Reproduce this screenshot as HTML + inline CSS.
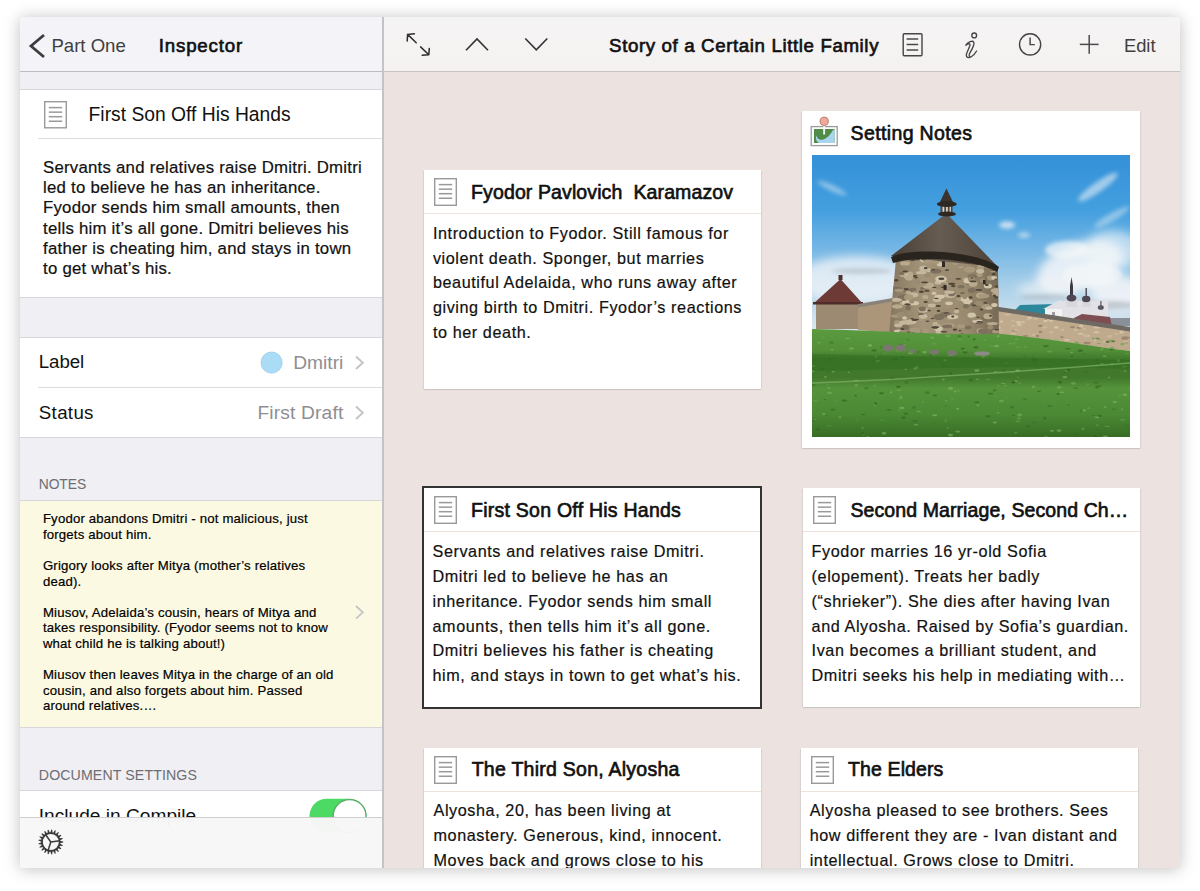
<!DOCTYPE html>
<html><head><meta charset="utf-8"><title>Scrivener Inspector</title><style>
html,body{margin:0;padding:0}
body{width:1200px;height:891px;background:#fff;overflow:hidden;position:relative;font-family:"Liberation Sans",sans-serif}
#screen{position:absolute;left:20px;top:17px;width:1160px;height:851px;overflow:hidden;background:#ece3e1;box-shadow:0 1px 15px rgba(0,0,0,.25)}
.a{position:absolute}
.t{position:absolute;white-space:pre;line-height:1;font-family:"Liberation Sans",sans-serif}
svg{position:absolute;overflow:visible}
</style></head><body>
<div id="screen">
<div class="a" style="left:0px;top:0px;width:363px;height:54px;background:#f4f4f8;"></div>
<div class="a" style="left:0px;top:54px;width:363px;height:1px;background:#bcbcc1;"></div>
<div class="a" style="left:0px;top:55px;width:363px;height:18px;background:#efeff4;"></div>
<div class="a" style="left:0px;top:72px;width:363px;height:1px;background:#d6d6db;"></div>
<div class="a" style="left:0px;top:73px;width:363px;height:207px;background:#ffffff;"></div>
<div class="a" style="left:0px;top:280px;width:363px;height:1px;background:#d6d6db;"></div>
<div class="a" style="left:0px;top:281px;width:363px;height:39px;background:#efeff4;"></div>
<div class="a" style="left:0px;top:320px;width:363px;height:1px;background:#d6d6db;"></div>
<div class="a" style="left:0px;top:321px;width:363px;height:99px;background:#ffffff;"></div>
<div class="a" style="left:18px;top:370px;width:345px;height:1px;background:#dcdce0;"></div>
<div class="a" style="left:0px;top:420px;width:363px;height:1px;background:#d6d6db;"></div>
<div class="a" style="left:0px;top:421px;width:363px;height:62px;background:#efeff4;"></div>
<div class="a" style="left:0px;top:483px;width:363px;height:1px;background:#d6d6db;"></div>
<div class="a" style="left:0px;top:484px;width:363px;height:226px;background:#fcf9e3;"></div>
<div class="a" style="left:0px;top:710px;width:363px;height:1px;background:#d6d6db;"></div>
<div class="a" style="left:0px;top:711px;width:363px;height:62px;background:#efeff4;"></div>
<div class="a" style="left:0px;top:773px;width:363px;height:1px;background:#d6d6db;"></div>
<div class="a" style="left:0px;top:774px;width:363px;height:77px;background:#ffffff;"></div>
<svg style="left:6px;top:13px;" width="24" height="32" viewBox="26 30 24 32"><polyline points="44,35 31,46 44,57" fill="none" stroke="#3d3d3d" stroke-width="2.8" stroke-linecap="butt" stroke-linejoin="miter"/></svg>
<div class="t" style="left:31.40px;top:20.26px;font-size:18.6px;color:#3f3f3f;">Part One</div>
<div class="t" style="left:138.80px;top:20.17px;font-size:18.7px;color:#111;letter-spacing:0.814px;-webkit-text-stroke:0.65px #111;">Inspector</div>
<svg style="left:23px;top:82.5px;" width="25" height="29.5" viewBox="43 99.5 25 29.5"><rect x="44.7" y="101.2" width="21.6" height="26.1" fill="#fff" stroke="#999" stroke-width="1.4"/><line x1="48.8" y1="107.10" x2="62.2" y2="107.10" stroke="#999" stroke-width="1.5"/><line x1="48.8" y1="111.65" x2="62.2" y2="111.65" stroke="#999" stroke-width="1.5"/><line x1="48.8" y1="116.20" x2="62.2" y2="116.20" stroke="#999" stroke-width="1.5"/><line x1="48.8" y1="120.75" x2="62.2" y2="120.75" stroke="#999" stroke-width="1.5"/></svg>
<div class="a" style="left:18px;top:121px;width:345px;height:1px;background:#dcdce0;"></div>
<div class="t" style="left:68.60px;top:87.66px;font-size:19.3px;color:#111;letter-spacing:-0.007px;">First Son Off His Hands</div>
<div class="t" style="left:23.00px;top:142.78px;font-size:16.8px;color:#111;letter-spacing:0.240px;-webkit-text-stroke:0.2px #111;">Servants and relatives raise Dmitri. Dmitri</div>
<div class="t" style="left:23.00px;top:163.08px;font-size:16.8px;color:#111;letter-spacing:0.240px;-webkit-text-stroke:0.2px #111;">led to believe he has an inheritance.</div>
<div class="t" style="left:23.00px;top:183.38px;font-size:16.8px;color:#111;letter-spacing:0.240px;-webkit-text-stroke:0.2px #111;">Fyodor sends him small amounts, then</div>
<div class="t" style="left:23.00px;top:203.68px;font-size:16.8px;color:#111;letter-spacing:0.240px;-webkit-text-stroke:0.2px #111;">tells him it’s all gone. Dmitri believes his</div>
<div class="t" style="left:23.00px;top:223.98px;font-size:16.8px;color:#111;letter-spacing:0.240px;-webkit-text-stroke:0.2px #111;">father is cheating him, and stays in town</div>
<div class="t" style="left:23.00px;top:244.28px;font-size:16.8px;color:#111;letter-spacing:0.240px;-webkit-text-stroke:0.2px #111;">to get what’s his.</div>
<div class="t" style="left:18.80px;top:336.17px;font-size:18.7px;color:#111;letter-spacing:-0.087px;">Label</div>
<svg style="left:238px;top:333px;" width="28" height="26" viewBox="258 350 28 26"><circle cx="271.6" cy="362.6" r="10.6" fill="#abdcf5" stroke="#9acde6" stroke-width="0.8"/></svg>
<div class="t" style="left:273.20px;top:335.75px;font-size:19.2px;color:#8e8e93;letter-spacing:0.018px;">Dmitri</div>
<svg style="left:330px;top:333px;" width="20" height="26" viewBox="350 350 20 26"><polyline points="356,356.5 362.8,362.8 356,369" fill="none" stroke="#c4c4c9" stroke-width="2"/></svg>
<div class="t" style="left:18.80px;top:386.87px;font-size:18.7px;color:#111;letter-spacing:0.336px;">Status</div>
<div class="t" style="left:237.40px;top:386.45px;font-size:19.2px;color:#8e8e93;letter-spacing:0.162px;">First Draft</div>
<svg style="left:330px;top:383px;" width="20" height="26" viewBox="350 400 20 26"><polyline points="356,406.5 362.8,412.8 356,419" fill="none" stroke="#c4c4c9" stroke-width="2"/></svg>
<div class="t" style="left:18.70px;top:460.83px;font-size:13.9px;color:#6d6d72;letter-spacing:-0.092px;">NOTES</div>
<div class="t" style="left:22.90px;top:495.43px;font-size:13.2px;color:#000;letter-spacing:0.176px;-webkit-text-stroke:0.2px #000;">Fyodor abandons Dmitri - not malicious, just</div>
<div class="t" style="left:22.90px;top:511.01px;font-size:13.2px;color:#000;letter-spacing:0.176px;-webkit-text-stroke:0.2px #000;">forgets about him.</div>
<div class="t" style="left:22.90px;top:542.17px;font-size:13.2px;color:#000;letter-spacing:0.176px;-webkit-text-stroke:0.2px #000;">Grigory looks after Mitya (mother’s relatives</div>
<div class="t" style="left:22.90px;top:557.75px;font-size:13.2px;color:#000;letter-spacing:0.176px;-webkit-text-stroke:0.2px #000;">dead).</div>
<div class="t" style="left:22.90px;top:588.91px;font-size:13.2px;color:#000;letter-spacing:0.176px;-webkit-text-stroke:0.2px #000;">Miusov, Adelaida’s cousin, hears of Mitya and</div>
<div class="t" style="left:22.90px;top:604.49px;font-size:13.2px;color:#000;letter-spacing:0.176px;-webkit-text-stroke:0.2px #000;">takes responsibility. (Fyodor seems not to know</div>
<div class="t" style="left:22.90px;top:620.07px;font-size:13.2px;color:#000;letter-spacing:0.176px;-webkit-text-stroke:0.2px #000;">what child he is talking about!)</div>
<div class="t" style="left:22.90px;top:651.23px;font-size:13.2px;color:#000;letter-spacing:0.176px;-webkit-text-stroke:0.2px #000;">Miusov then leaves Mitya in the charge of an old</div>
<div class="t" style="left:22.90px;top:666.81px;font-size:13.2px;color:#000;letter-spacing:0.176px;-webkit-text-stroke:0.2px #000;">cousin, and also forgets about him. Passed</div>
<div class="t" style="left:22.90px;top:682.39px;font-size:13.2px;color:#000;letter-spacing:0.176px;-webkit-text-stroke:0.2px #000;">around relatives.…</div>
<svg style="left:330px;top:583px;" width="20" height="26" viewBox="350 600 20 26"><polyline points="356,606 362.8,612.3 356,618.6" fill="none" stroke="#c4c4c9" stroke-width="1.8"/></svg>
<div class="t" style="left:18.80px;top:750.98px;font-size:14.2px;color:#6d6d72;letter-spacing:0.094px;">DOCUMENT SETTINGS</div>
<div class="t" style="left:18.80px;top:789.33px;font-size:19.1px;color:#111;letter-spacing:0.018px;">Include in Compile</div>
<svg style="left:285px;top:777px;" width="67" height="46" viewBox="305 794 67 46"><rect x="309.5" y="798.8" width="57" height="34.5" rx="17.25" fill="#4cd964"/><circle cx="349.6" cy="816" r="16.4" fill="#fff" stroke="#5aa865" stroke-width="1.3"/></svg>
<div class="a" style="left:0px;top:800px;width:363px;height:51px;background:rgba(247,247,247,0.975);"></div>
<div class="a" style="left:0px;top:800px;width:363px;height:1px;background:#cfcfcf;"></div>
<svg style="left:16px;top:811px;" width="30" height="29" viewBox="36 828 30 29"><path d="M59.40,843.25 L63.20,842.45 L63.20,841.55 L59.40,840.75Z M58.65,845.73 L62.52,846.08 L62.78,845.22 L59.39,843.34Z M57.20,847.88 L60.79,849.36 L61.30,848.61 L58.61,845.81Z M55.18,849.50 L58.18,851.98 L58.88,851.41 L57.14,847.94Z M52.78,850.46 L54.91,853.71 L55.75,853.38 L55.11,849.55Z M50.20,850.67 L51.28,854.40 L52.18,854.33 L52.69,850.48Z M47.67,850.11 L47.60,853.99 L48.48,854.19 L50.10,850.66Z M45.42,848.82 L44.21,852.51 L44.99,852.96 L47.58,850.07Z M43.65,846.93 L41.40,850.10 L42.02,850.76 L45.35,848.77Z M42.51,844.61 L39.43,846.97 L39.82,847.79 L43.59,846.86Z M42.11,842.05 L38.47,843.40 L38.61,844.29 L42.48,844.52Z M42.48,839.48 L38.61,839.71 L38.47,840.60 L42.11,841.95Z M43.59,837.14 L39.82,836.21 L39.43,837.03 L42.51,839.39Z M45.35,835.23 L42.02,833.24 L41.40,833.90 L43.65,837.07Z M47.58,833.93 L44.99,831.04 L44.21,831.49 L45.42,835.18Z M50.10,833.34 L48.48,829.81 L47.60,830.01 L47.67,833.89Z M52.69,833.52 L52.18,829.67 L51.28,829.60 L50.20,833.33Z M55.11,834.45 L55.75,830.62 L54.91,830.29 L52.78,833.54Z M57.14,836.06 L58.88,832.59 L58.18,832.02 L55.18,834.50Z M58.61,838.19 L61.30,835.39 L60.79,834.64 L57.20,836.12Z M59.39,840.66 L62.78,838.78 L62.52,837.92 L58.65,838.27Z" fill="#3a3a3a"/><circle cx="50.8" cy="842" r="8.9" fill="none" stroke="#3a3a3a" stroke-width="1.8"/><line x1="50.8" y1="842" x2="45.52" y2="834.46" stroke="#3a3a3a" stroke-width="1.5"/><line x1="50.8" y1="842" x2="59.91" y2="840.72" stroke="#3a3a3a" stroke-width="1.5"/><line x1="50.8" y1="842" x2="47.96" y2="850.75" stroke="#3a3a3a" stroke-width="1.5"/></svg>
<div class="a" style="left:362px;top:0px;width:2px;height:851px;background:#c4c4c7;"></div>
<div class="a" style="left:364px;top:0px;width:796px;height:54px;background:linear-gradient(#f5f4f4,#f5f1f1);"></div>
<div class="a" style="left:364px;top:54px;width:796px;height:1px;background:#c8c3c3;"></div>
<svg style="left:380px;top:11px;" width="36" height="34" viewBox="400 28 36 34"><g fill="none" stroke="#2e2e2e" stroke-width="1.5" stroke-linecap="round" stroke-linejoin="round"><path d="M407.6,34.4 L416.2,42.8 M407.2,41 L407.6,34.4 L414.4,33.8"/><path d="M420.6,46.9 L428.8,54.8 M429.3,48.4 L428.8,54.8 L422.2,55.3"/></g></svg>
<svg style="left:440px;top:16px;" width="34" height="23" viewBox="460 33 34 23"><polyline points="466,50.2 477,38.9 488,50.2" fill="none" stroke="#333" stroke-width="1.6"/></svg>
<svg style="left:500px;top:16px;" width="34" height="23" viewBox="520 33 34 23"><polyline points="525.3,38.5 536.3,49.8 547.3,38.5" fill="none" stroke="#333" stroke-width="1.6"/></svg>
<div class="t" style="left:589.10px;top:19.87px;font-size:18.7px;color:#111;letter-spacing:0.616px;-webkit-text-stroke:0.65px #111;">Story of a Certain Little Family</div>
<svg style="left:878px;top:11px;" width="30" height="34" viewBox="898 28 30 34"><rect x="903.2" y="33.8" width="18.8" height="22" rx="1" fill="none" stroke="#454545" stroke-width="1.4"/><g stroke="#454545" stroke-width="1.45"><line x1="906.6" y1="39" x2="918.2" y2="39"/><line x1="906.6" y1="44.5" x2="918.2" y2="44.5"/><line x1="906.6" y1="50" x2="918.2" y2="50"/></g></svg>
<svg style="left:938px;top:11px;" width="28" height="34" viewBox="958 28 28 34"><circle cx="974.2" cy="35.4" r="2.4" fill="none" stroke="#454545" stroke-width="1.35"/><path d="M965.8,45.2 C968,42.2 972.5,39.8 973.8,42.2 C975,44.5 971.5,50 969.6,53.5 C968.5,56 969.5,57.6 971.5,56.5 C973.5,55.3 975.5,53 976.6,51 M965.8,45.2 C967.5,44 969.8,43.2 970,44.6 C970.3,46.3 966.5,52 966.3,55 C966.1,58 969,58.2 971.5,56.5" fill="none" stroke="#454545" stroke-width="1.35" stroke-linejoin="round" stroke-linecap="round"/></svg>
<svg style="left:995px;top:13px;" width="31" height="30" viewBox="1015 30 31 30"><circle cx="1030.1" cy="44.4" r="10.6" fill="none" stroke="#454545" stroke-width="1.4"/><polyline points="1030.1,37.6 1030.1,44.6 1034.8,44.6" fill="none" stroke="#454545" stroke-width="1.45"/></svg>
<svg style="left:1056px;top:14px;" width="26" height="27" viewBox="1076 31 26 27"><g stroke="#4a4a4a" stroke-width="1.5"><line x1="1079.8" y1="44.4" x2="1098.6" y2="44.4"/><line x1="1089.2" y1="35" x2="1089.2" y2="53.8"/></g></svg>
<div class="t" style="left:1103.90px;top:19.92px;font-size:18.4px;color:#3f3f3f;letter-spacing:-0.026px;">Edit</div>
<div class="a" style="left:404px;top:153px;width:337px;height:219px;background:#fff;box-shadow:0 0.5px 1.5px rgba(0,0,0,.35);"></div>
<div class="a" style="left:404px;top:196px;width:337px;height:1px;background:#eee3dc;"></div>
<svg style="left:413px;top:160px;" width="25" height="30" viewBox="433 177 25 30"><rect x="434.7" y="178.7" width="21.6" height="26.6" fill="#fff" stroke="#999" stroke-width="1.4"/><line x1="438.8" y1="184.60" x2="452.2" y2="184.60" stroke="#999" stroke-width="1.5"/><line x1="438.8" y1="189.15" x2="452.2" y2="189.15" stroke="#999" stroke-width="1.5"/><line x1="438.8" y1="193.70" x2="452.2" y2="193.70" stroke="#999" stroke-width="1.5"/><line x1="438.8" y1="198.25" x2="452.2" y2="198.25" stroke="#999" stroke-width="1.5"/></svg>
<div class="t" style="left:451.10px;top:165.89px;font-size:19.5px;color:#111;letter-spacing:0.110px;-webkit-text-stroke:0.65px #111;">Fyodor Pavlovich  Karamazov</div>
<div class="t" style="left:412.90px;top:207.89px;font-size:16.2px;color:#111;letter-spacing:0.584px;-webkit-text-stroke:0.2px #111;">Introduction to Fyodor. Still famous for</div>
<div class="t" style="left:412.90px;top:232.69px;font-size:16.2px;color:#111;letter-spacing:0.584px;-webkit-text-stroke:0.2px #111;">violent death. Sponger, but marries</div>
<div class="t" style="left:412.90px;top:257.49px;font-size:16.2px;color:#111;letter-spacing:0.584px;-webkit-text-stroke:0.2px #111;">beautiful Adelaida, who runs away after</div>
<div class="t" style="left:412.90px;top:282.29px;font-size:16.2px;color:#111;letter-spacing:0.584px;-webkit-text-stroke:0.2px #111;">giving birth to Dmitri. Fyodor’s reactions</div>
<div class="t" style="left:412.90px;top:307.09px;font-size:16.2px;color:#111;letter-spacing:0.584px;-webkit-text-stroke:0.2px #111;">to her death.</div>
<div class="a" style="left:782px;top:94px;width:338px;height:337px;background:#fff;box-shadow:0 0.5px 1.5px rgba(0,0,0,.35);"></div>
<div class="t" style="left:830.60px;top:106.69px;font-size:19.5px;color:#111;letter-spacing:0.363px;-webkit-text-stroke:0.65px #111;">Setting Notes</div>
<svg style="left:788px;top:97px;" width="34" height="36" viewBox="808 114 34 36"><rect x="811.2" y="126.6" width="26" height="19" fill="#fff" stroke="#9a9a9a" stroke-width="1.3"/><rect x="814" y="129" width="20.5" height="14" fill="#4f8c48"/><path d="M816.5,135.5 C817.5,141.5 826,142.5 833,130 L834.5,130 L834.5,143 L819,143 C816,141.5 815.5,138 816.5,135.5 Z" fill="#a9d4f0"/><rect x="823.2" y="125.5" width="1.9" height="9" fill="#f4f8f4"/><circle cx="824.2" cy="121.3" r="4.1" fill="#f2a898" stroke="#a87060" stroke-width="0.9"/></svg>
<svg style="left:792px;top:138px;overflow:hidden" width="318" height="282" viewBox="0 0 318 282">
<defs>
<linearGradient id="sky" x1="0" y1="0" x2="0" y2="1">
<stop offset="0" stop-color="#3490d8"/><stop offset="0.2" stop-color="#45a0df"/>
<stop offset="0.34" stop-color="#78b8e5"/><stop offset="0.46" stop-color="#a8cfe9"/><stop offset="0.6" stop-color="#d6e4ed"/></linearGradient>
<linearGradient id="grass" x1="0" y1="0" x2="0" y2="1">
<stop offset="0" stop-color="#5c9a40"/><stop offset="0.2" stop-color="#528f38"/><stop offset="0.28" stop-color="#3f782b"/>
<stop offset="0.45" stop-color="#42782c"/><stop offset="0.55" stop-color="#55933b"/><stop offset="0.8" stop-color="#4a8834"/><stop offset="1" stop-color="#376d25"/></linearGradient>
<linearGradient id="stone" x1="0" y1="0" x2="1" y2="0">
<stop offset="0" stop-color="#85775f"/><stop offset="0.3" stop-color="#a39479"/><stop offset="0.7" stop-color="#9a8b70"/><stop offset="1" stop-color="#766954"/></linearGradient>
<linearGradient id="roof" x1="0" y1="0" x2="1" y2="0">
<stop offset="0" stop-color="#463e36"/><stop offset="0.45" stop-color="#675c51"/><stop offset="1" stop-color="#4d433a"/></linearGradient>
<clipPath id="twr"><path d="M84,104 C110,100 160,104 186,114 L187,180 C160,184 110,184 77,179 Z"/></clipPath><clipPath id="wal"><polygon points="184,155 318,175 318,196 184,180"/></clipPath>
<filter id="bl5" x="-50%" y="-50%" width="200%" height="200%"><feGaussianBlur stdDeviation="5"/></filter>
<filter id="bl2" x="-50%" y="-50%" width="200%" height="200%"><feGaussianBlur stdDeviation="2"/></filter>
</defs>
<rect width="318" height="282" fill="url(#sky)"/>
<g filter="url(#bl5)" fill="#f4f6f8">
<ellipse cx="268" cy="112" rx="45" ry="24" opacity="0.85" transform="rotate(-20 268 112)"/>
<ellipse cx="300" cy="95" rx="28" ry="20" opacity="0.6"/>
<ellipse cx="305" cy="138" rx="26" ry="18" opacity="0.85"/>
<ellipse cx="235" cy="135" rx="30" ry="10" opacity="0.55"/>
<ellipse cx="45" cy="125" rx="62" ry="24" opacity="0.75"/>
</g>
<g filter="url(#bl2)" fill="#f4f6f8">
<ellipse cx="286" cy="32" rx="24" ry="5" opacity="0.55" transform="rotate(-35 286 32)"/>
<ellipse cx="300" cy="62" rx="20" ry="4" opacity="0.4" transform="rotate(-30 300 62)"/>
<ellipse cx="195" cy="70" rx="8" ry="3.5" opacity="0.75"/>
<ellipse cx="212" cy="80" rx="6" ry="2.5" opacity="0.6"/>
<ellipse cx="20" cy="33" rx="16" ry="3" opacity="0.45" transform="rotate(25 20 33)"/>
<ellipse cx="255" cy="95" rx="22" ry="9" opacity="0.7"/>
<ellipse cx="280" cy="120" rx="30" ry="12" opacity="0.7"/>
</g>
<g filter="url(#bl2)" fill="#8a929c" opacity="0.4">
<ellipse cx="232" cy="142" rx="24" ry="2.5"/><ellipse cx="300" cy="150" rx="22" ry="4"/><ellipse cx="50" cy="116" rx="30" ry="2.5"/>
</g>
<!-- church -->
<rect x="296" y="163" width="22" height="8" fill="#8a9099"/>
<rect x="204" y="155" width="48" height="17" fill="#e9ebee"/>
<polygon points="199,159 208,150 244,149 249,159" fill="#2b8799"/>
<rect x="233" y="153" width="30" height="17" fill="#f1f2f4"/>
<polygon points="231,154 248,145 264,154" fill="#dfe1e5"/>
<rect x="240" y="157" width="3" height="4" fill="#9a9aa0"/><rect x="250" y="157" width="3" height="4" fill="#9a9aa0"/>
<rect x="250" y="146" width="46" height="20" fill="#e2e2e6"/>
<rect x="254" y="142" width="11" height="10" fill="#d8d8dc"/><rect x="270" y="143" width="9" height="9" fill="#d8d8dc"/>
<polygon points="262,163 270,159 298,162 300,172 262,172" fill="#7d4d52"/>
<rect x="258" y="131" width="3" height="12" fill="#3d3a40"/><polygon points="258,131 259.5,122 261,131" fill="#3d3a40"/>
<ellipse cx="259.5" cy="143" rx="5" ry="3.5" fill="#4e4854"/>
<rect x="273.5" y="133" width="1.4" height="8" fill="#4a4450"/><ellipse cx="274.2" cy="144" rx="4.2" ry="3.2" fill="#4e4854"/>
<rect x="288.3" y="146" width="1.2" height="5" fill="#5a5460"/><ellipse cx="288.8" cy="152.5" rx="3" ry="2.3" fill="#5a5460"/>
<!-- right wall -->
<polygon points="184,155 318,175 318,196 184,180" fill="#bfaa8d"/>
<g clip-path="url(#wal)">
<ellipse cx="312.7" cy="183.8" rx="3.4" ry="1.0" fill="#9c8870"/>
<ellipse cx="275.1" cy="181.0" rx="2.3" ry="1.1" fill="#d4c4a8"/>
<ellipse cx="249.9" cy="182.1" rx="2.0" ry="0.9" fill="#9c8870"/>
<ellipse cx="236.0" cy="164.6" rx="3.3" ry="1.1" fill="#9c8870"/>
<ellipse cx="201.2" cy="171.0" rx="2.3" ry="1.1" fill="#c9b79c"/>
<ellipse cx="312.9" cy="182.4" rx="3.3" ry="1.2" fill="#9c8870"/>
<ellipse cx="211.2" cy="167.1" rx="2.0" ry="0.8" fill="#d4c4a8"/>
<ellipse cx="189.3" cy="175.3" rx="2.0" ry="0.9" fill="#c9b79c"/>
<ellipse cx="221.6" cy="179.7" rx="1.8" ry="1.2" fill="#c9b79c"/>
<ellipse cx="207.0" cy="168.0" rx="2.9" ry="1.1" fill="#d4c4a8"/>
<ellipse cx="213.5" cy="181.1" rx="2.5" ry="1.0" fill="#9c8870"/>
<ellipse cx="275.1" cy="188.0" rx="3.5" ry="1.3" fill="#9c8870"/>
<ellipse cx="263.6" cy="175.3" rx="2.0" ry="1.3" fill="#c9b79c"/>
<ellipse cx="202.6" cy="175.7" rx="2.9" ry="0.9" fill="#9c8870"/>
<ellipse cx="283.1" cy="185.4" rx="1.6" ry="1.4" fill="#c9b79c"/>
<ellipse cx="227.0" cy="171.2" rx="1.7" ry="0.9" fill="#c9b79c"/>
<ellipse cx="228.4" cy="176.9" rx="1.7" ry="1.2" fill="#9c8870"/>
<ellipse cx="292.3" cy="186.4" rx="1.9" ry="1.4" fill="#c9b79c"/>
<ellipse cx="215.9" cy="164.4" rx="2.9" ry="1.0" fill="#9c8870"/>
<ellipse cx="297.5" cy="181.3" rx="2.8" ry="1.3" fill="#c9b79c"/>
<ellipse cx="309.6" cy="177.3" rx="2.2" ry="1.4" fill="#d4c4a8"/>
<ellipse cx="232.4" cy="172.3" rx="2.8" ry="1.4" fill="#c9b79c"/>
<ellipse cx="318.0" cy="182.6" rx="3.3" ry="0.9" fill="#9c8870"/>
<ellipse cx="201.2" cy="178.9" rx="3.0" ry="1.4" fill="#c9b79c"/>
<ellipse cx="239.4" cy="177.2" rx="2.4" ry="1.4" fill="#c9b79c"/>
<ellipse cx="236.3" cy="165.3" rx="2.1" ry="1.3" fill="#c9b79c"/>
<ellipse cx="260.5" cy="172.1" rx="2.5" ry="1.2" fill="#9c8870"/>
<ellipse cx="274.5" cy="180.7" rx="3.4" ry="0.9" fill="#d4c4a8"/>
<ellipse cx="223.8" cy="163.7" rx="3.2" ry="1.3" fill="#c9b79c"/>
<ellipse cx="314.6" cy="187.5" rx="1.6" ry="1.1" fill="#9c8870"/>
<ellipse cx="284.9" cy="172.4" rx="2.9" ry="1.1" fill="#d4c4a8"/>
<ellipse cx="267.2" cy="172.8" rx="2.6" ry="1.1" fill="#9c8870"/>
<ellipse cx="244.4" cy="172.4" rx="2.5" ry="1.4" fill="#d4c4a8"/>
<ellipse cx="268.6" cy="178.7" rx="2.9" ry="1.0" fill="#d4c4a8"/>
<ellipse cx="253.6" cy="185.2" rx="1.8" ry="1.4" fill="#c9b79c"/>
<ellipse cx="311.7" cy="189.9" rx="2.6" ry="0.9" fill="#c9b79c"/>
<ellipse cx="314.0" cy="186.6" rx="2.6" ry="1.0" fill="#c9b79c"/>
<ellipse cx="208.2" cy="168.0" rx="1.7" ry="1.3" fill="#c9b79c"/>
<ellipse cx="204.0" cy="175.0" rx="2.8" ry="1.0" fill="#c9b79c"/>
<ellipse cx="186.8" cy="172.6" rx="1.8" ry="1.3" fill="#d4c4a8"/>
<ellipse cx="225.5" cy="181.1" rx="1.8" ry="1.3" fill="#9c8870"/>
<ellipse cx="269.1" cy="171.0" rx="2.3" ry="1.6" fill="#d4c4a8"/>
<ellipse cx="274.0" cy="181.1" rx="2.4" ry="1.4" fill="#c9b79c"/>
<ellipse cx="201.1" cy="166.0" rx="2.2" ry="1.0" fill="#c9b79c"/>
<ellipse cx="304.2" cy="179.1" rx="1.7" ry="1.0" fill="#c9b79c"/>
<ellipse cx="207.3" cy="169.9" rx="2.6" ry="1.0" fill="#d4c4a8"/>
<ellipse cx="195.5" cy="159.4" rx="3.5" ry="1.4" fill="#c9b79c"/>
<ellipse cx="284.6" cy="177.2" rx="3.0" ry="1.0" fill="#d4c4a8"/>
<ellipse cx="250.5" cy="175.0" rx="1.9" ry="1.2" fill="#c9b79c"/>
<ellipse cx="233.4" cy="166.0" rx="2.1" ry="1.3" fill="#d4c4a8"/>
<ellipse cx="272.1" cy="174.0" rx="2.0" ry="0.9" fill="#c9b79c"/>
<ellipse cx="189.3" cy="166.7" rx="1.8" ry="1.1" fill="#d4c4a8"/>
<ellipse cx="255.4" cy="184.8" rx="2.9" ry="0.9" fill="#d4c4a8"/>
<ellipse cx="295.6" cy="186.5" rx="2.2" ry="0.9" fill="#9c8870"/>
<ellipse cx="228.3" cy="170.9" rx="2.6" ry="1.1" fill="#9c8870"/>
<ellipse cx="217.6" cy="162.9" rx="2.6" ry="1.3" fill="#d4c4a8"/>
<ellipse cx="239.2" cy="165.9" rx="1.9" ry="1.1" fill="#d4c4a8"/>
<ellipse cx="206.8" cy="166.9" rx="2.7" ry="0.9" fill="#d4c4a8"/>
<ellipse cx="216.0" cy="164.7" rx="2.8" ry="1.1" fill="#c9b79c"/>
<ellipse cx="298.3" cy="181.7" rx="1.9" ry="1.1" fill="#c9b79c"/>
</g>
<polygon points="184,151.5 318,172 318,176.5 184,156" fill="#6e6963"/>
<!-- left tower -->
<rect x="4" y="147" width="44" height="27" fill="#9c8b72"/>
<polygon points="28.5,124 1,149 51,149" fill="#6e3a36"/>
<rect x="1" y="147" width="50" height="2.5" fill="#4f2d2a"/>
<rect x="26.5" y="120" width="4" height="5" fill="#4d302c"/>
<!-- left wall -->
<polygon points="46,152 84,145.5 84,178 46,175" fill="#ab9679"/>
<polygon points="46,149 84,142.5 84,146 46,152.5" fill="#8a8178"/>
<!-- main tower -->
<path d="M84,104 C110,100 160,104 186,114 L187,180 C160,184 110,184 77,179 Z" fill="url(#stone)"/>
<g clip-path="url(#twr)">
<ellipse cx="116.7" cy="115.5" rx="4.8" ry="1.6" fill="#d0c4ab"/>
<ellipse cx="93.5" cy="148.3" rx="5.7" ry="1.9" fill="#b9aa8e"/>
<ellipse cx="127.8" cy="109.3" rx="2.8" ry="2.2" fill="#d0c4ab"/>
<ellipse cx="96.5" cy="121.0" rx="4.7" ry="3.1" fill="#d0c4ab"/>
<ellipse cx="143.1" cy="107.8" rx="3.3" ry="2.4" fill="#a8987c"/>
<ellipse cx="113.3" cy="115.0" rx="2.9" ry="2.0" fill="#9a8b72"/>
<ellipse cx="102.3" cy="148.2" rx="4.7" ry="2.1" fill="#d0c4ab"/>
<ellipse cx="155.9" cy="146.9" rx="4.7" ry="2.3" fill="#d0c4ab"/>
<ellipse cx="127.2" cy="127.9" rx="4.5" ry="2.3" fill="#c4b79e"/>
<ellipse cx="109.1" cy="117.7" rx="5.2" ry="1.6" fill="#c4b79e"/>
<ellipse cx="137.0" cy="170.5" rx="5.1" ry="2.0" fill="#b9aa8e"/>
<ellipse cx="95.9" cy="135.8" rx="5.1" ry="1.8" fill="#7d705d"/>
<ellipse cx="126.6" cy="177.1" rx="2.8" ry="2.4" fill="#c4b79e"/>
<ellipse cx="118.4" cy="130.6" rx="4.2" ry="2.9" fill="#b9aa8e"/>
<ellipse cx="168.8" cy="175.8" rx="4.2" ry="2.6" fill="#b9aa8e"/>
<ellipse cx="157.8" cy="127.5" rx="4.5" ry="2.7" fill="#7d705d"/>
<ellipse cx="112.7" cy="133.3" rx="4.8" ry="1.5" fill="#7d705d"/>
<ellipse cx="119.9" cy="150.4" rx="4.2" ry="1.9" fill="#c4b79e"/>
<ellipse cx="97.1" cy="122.8" rx="3.9" ry="3.0" fill="#b9aa8e"/>
<ellipse cx="100.8" cy="134.5" rx="3.5" ry="1.7" fill="#7d705d"/>
<ellipse cx="171.3" cy="125.2" rx="4.0" ry="2.1" fill="#7d705d"/>
<ellipse cx="180.7" cy="115.5" rx="3.1" ry="1.9" fill="#a8987c"/>
<ellipse cx="85.2" cy="167.2" rx="3.1" ry="2.0" fill="#a8987c"/>
<ellipse cx="126.3" cy="132.1" rx="4.5" ry="3.1" fill="#9a8b72"/>
<ellipse cx="170.8" cy="176.2" rx="4.8" ry="2.8" fill="#7d705d"/>
<ellipse cx="174.9" cy="163.3" rx="5.6" ry="2.9" fill="#7d705d"/>
<ellipse cx="124.2" cy="134.0" rx="4.2" ry="2.2" fill="#a8987c"/>
<ellipse cx="90.8" cy="119.9" rx="3.1" ry="2.1" fill="#b9aa8e"/>
<ellipse cx="94.3" cy="147.1" rx="4.4" ry="3.1" fill="#d0c4ab"/>
<ellipse cx="86.6" cy="170.4" rx="4.6" ry="1.8" fill="#c4b79e"/>
<ellipse cx="180.5" cy="149.8" rx="4.2" ry="1.7" fill="#7d705d"/>
<ellipse cx="184.3" cy="139.4" rx="4.2" ry="1.6" fill="#b9aa8e"/>
<ellipse cx="159.7" cy="160.3" rx="4.2" ry="2.7" fill="#d0c4ab"/>
<ellipse cx="86.3" cy="176.3" rx="4.3" ry="1.7" fill="#d0c4ab"/>
<ellipse cx="176.3" cy="161.6" rx="3.5" ry="2.6" fill="#b9aa8e"/>
<ellipse cx="154.3" cy="123.8" rx="3.8" ry="1.8" fill="#a8987c"/>
<ellipse cx="137.8" cy="163.2" rx="3.7" ry="1.9" fill="#a8987c"/>
<ellipse cx="165.4" cy="166.2" rx="5.1" ry="1.9" fill="#d0c4ab"/>
<ellipse cx="133.8" cy="159.6" rx="6.0" ry="2.8" fill="#7d705d"/>
<ellipse cx="110.2" cy="156.6" rx="5.8" ry="2.3" fill="#9a8b72"/>
<ellipse cx="183.8" cy="176.6" rx="3.8" ry="1.9" fill="#a8987c"/>
<ellipse cx="131.5" cy="129.7" rx="4.2" ry="3.2" fill="#d0c4ab"/>
<ellipse cx="168.9" cy="140.4" rx="4.8" ry="2.9" fill="#b9aa8e"/>
<ellipse cx="168.3" cy="113.1" rx="3.9" ry="2.7" fill="#a8987c"/>
<ellipse cx="132.3" cy="117.6" rx="5.3" ry="2.1" fill="#9a8b72"/>
<ellipse cx="124.0" cy="134.5" rx="5.8" ry="2.7" fill="#a8987c"/>
<ellipse cx="184.3" cy="106.1" rx="4.6" ry="2.3" fill="#9a8b72"/>
<ellipse cx="98.8" cy="166.8" rx="5.9" ry="2.6" fill="#c4b79e"/>
<ellipse cx="99.7" cy="145.7" rx="2.6" ry="2.9" fill="#9a8b72"/>
<ellipse cx="149.6" cy="144.0" rx="5.8" ry="2.2" fill="#a8987c"/>
<ellipse cx="167.4" cy="120.0" rx="3.4" ry="2.0" fill="#a8987c"/>
<ellipse cx="161.1" cy="128.8" rx="4.4" ry="2.9" fill="#b9aa8e"/>
<ellipse cx="175.9" cy="130.9" rx="4.1" ry="2.5" fill="#d0c4ab"/>
<ellipse cx="126.5" cy="173.7" rx="4.3" ry="2.4" fill="#d0c4ab"/>
<ellipse cx="135.6" cy="170.3" rx="5.2" ry="2.5" fill="#a8987c"/>
<ellipse cx="101.4" cy="140.0" rx="5.0" ry="2.4" fill="#c4b79e"/>
<ellipse cx="152.9" cy="144.3" rx="4.2" ry="2.8" fill="#d0c4ab"/>
<ellipse cx="89.7" cy="118.5" rx="2.6" ry="1.7" fill="#7d705d"/>
<ellipse cx="140.7" cy="161.8" rx="5.7" ry="2.3" fill="#d0c4ab"/>
<ellipse cx="182.3" cy="150.1" rx="3.2" ry="2.0" fill="#d0c4ab"/>
<ellipse cx="137.9" cy="140.3" rx="5.8" ry="2.7" fill="#c4b79e"/>
<ellipse cx="177.2" cy="171.8" rx="3.2" ry="2.3" fill="#7d705d"/>
<ellipse cx="96.3" cy="137.6" rx="2.8" ry="1.9" fill="#b9aa8e"/>
<ellipse cx="105.5" cy="127.0" rx="2.9" ry="2.8" fill="#9a8b72"/>
<ellipse cx="149.0" cy="131.8" rx="3.4" ry="1.7" fill="#7d705d"/>
<ellipse cx="106.2" cy="176.4" rx="3.9" ry="2.3" fill="#9a8b72"/>
<ellipse cx="168.1" cy="116.3" rx="4.0" ry="2.4" fill="#c4b79e"/>
<ellipse cx="126.5" cy="131.1" rx="2.8" ry="2.1" fill="#c4b79e"/>
<ellipse cx="140.0" cy="137.5" rx="2.6" ry="2.1" fill="#d0c4ab"/>
<ellipse cx="113.8" cy="177.0" rx="2.9" ry="3.1" fill="#a8987c"/>
<ellipse cx="182.1" cy="112.0" rx="3.4" ry="1.6" fill="#a8987c"/>
<ellipse cx="111.3" cy="113.8" rx="4.0" ry="3.0" fill="#c4b79e"/>
<ellipse cx="125.0" cy="144.8" rx="4.3" ry="2.3" fill="#c4b79e"/>
<ellipse cx="93.0" cy="108.4" rx="4.9" ry="2.2" fill="#b9aa8e"/>
<ellipse cx="111.2" cy="105.3" rx="2.8" ry="1.9" fill="#d0c4ab"/>
<ellipse cx="170.5" cy="109.1" rx="5.5" ry="2.3" fill="#c4b79e"/>
<ellipse cx="184.4" cy="135.7" rx="5.7" ry="2.6" fill="#b9aa8e"/>
<ellipse cx="137.2" cy="122.1" rx="2.9" ry="1.8" fill="#b9aa8e"/>
<ellipse cx="102.3" cy="174.9" rx="4.7" ry="2.4" fill="#a8987c"/>
<ellipse cx="113.3" cy="142.0" rx="3.1" ry="2.1" fill="#b9aa8e"/>
<ellipse cx="184.4" cy="106.8" rx="2.6" ry="2.4" fill="#a8987c"/>
<ellipse cx="135.9" cy="122.7" rx="4.1" ry="2.6" fill="#9a8b72"/>
<ellipse cx="127.6" cy="141.6" rx="5.4" ry="2.2" fill="#d0c4ab"/>
<ellipse cx="115.1" cy="120.4" rx="3.3" ry="1.8" fill="#9a8b72"/>
<ellipse cx="157.6" cy="114.6" rx="6.0" ry="3.2" fill="#a8987c"/>
<ellipse cx="85.4" cy="151.5" rx="5.6" ry="2.2" fill="#b9aa8e"/>
<ellipse cx="92.5" cy="167.9" rx="5.5" ry="2.6" fill="#c4b79e"/>
<ellipse cx="144.5" cy="156.6" rx="2.7" ry="1.8" fill="#c4b79e"/>
<ellipse cx="129.0" cy="124.0" rx="5.9" ry="3.2" fill="#d0c4ab"/>
<ellipse cx="116.7" cy="106.6" rx="5.6" ry="1.9" fill="#a8987c"/>
<ellipse cx="84.1" cy="133.0" rx="4.2" ry="2.4" fill="#a8987c"/>
<ellipse cx="109.1" cy="163.0" rx="2.8" ry="2.9" fill="#a8987c"/>
<ellipse cx="124.4" cy="107.2" rx="2.6" ry="2.0" fill="#a8987c"/>
<ellipse cx="92.5" cy="176.8" rx="5.5" ry="1.8" fill="#9a8b72"/>
<ellipse cx="163.2" cy="149.3" rx="5.2" ry="2.7" fill="#7d705d"/>
<ellipse cx="99.1" cy="159.0" rx="4.8" ry="1.6" fill="#9a8b72"/>
<ellipse cx="174.1" cy="151.7" rx="5.1" ry="2.9" fill="#a8987c"/>
<ellipse cx="175.9" cy="161.2" rx="4.5" ry="2.9" fill="#b9aa8e"/>
<ellipse cx="167.5" cy="148.4" rx="5.6" ry="2.7" fill="#9a8b72"/>
<ellipse cx="148.9" cy="110.5" rx="2.6" ry="2.6" fill="#b9aa8e"/>
<ellipse cx="122.0" cy="138.3" rx="2.7" ry="1.5" fill="#d0c4ab"/>
<ellipse cx="152.7" cy="141.2" rx="2.5" ry="2.9" fill="#9a8b72"/>
<ellipse cx="178.2" cy="172.2" rx="2.8" ry="2.4" fill="#9a8b72"/>
<ellipse cx="158.4" cy="123.2" rx="2.8" ry="2.0" fill="#9a8b72"/>
<ellipse cx="160.4" cy="121.5" rx="4.8" ry="2.3" fill="#7d705d"/>
<ellipse cx="91.8" cy="173.2" rx="3.5" ry="1.6" fill="#9a8b72"/>
<ellipse cx="148.9" cy="109.9" rx="3.0" ry="1.9" fill="#9a8b72"/>
<ellipse cx="154.0" cy="151.2" rx="3.0" ry="2.3" fill="#7d705d"/>
<ellipse cx="111.1" cy="155.1" rx="4.9" ry="2.6" fill="#c4b79e"/>
<ellipse cx="155.6" cy="125.7" rx="4.1" ry="2.8" fill="#d0c4ab"/>
<ellipse cx="104.1" cy="178.3" rx="5.8" ry="1.5" fill="#7d705d"/>
<ellipse cx="91.7" cy="142.5" rx="6.0" ry="3.2" fill="#7d705d"/>
<ellipse cx="105.2" cy="175.9" rx="3.2" ry="2.5" fill="#a8987c"/>
<ellipse cx="159.5" cy="123.9" rx="3.8" ry="2.5" fill="#9a8b72"/>
<ellipse cx="135.4" cy="171.4" rx="5.0" ry="1.9" fill="#7d705d"/>
<ellipse cx="123.8" cy="116.1" rx="5.8" ry="2.7" fill="#7d705d"/>
<ellipse cx="114.5" cy="114.7" rx="3.7" ry="2.0" fill="#c4b79e"/>
<ellipse cx="84.2" cy="161.1" rx="5.4" ry="1.7" fill="#a8987c"/>
<ellipse cx="156.0" cy="172.5" rx="3.5" ry="2.1" fill="#7d705d"/>
<ellipse cx="123.4" cy="170.1" rx="2.8" ry="3.1" fill="#c4b79e"/>
<ellipse cx="170.3" cy="125.3" rx="2.7" ry="2.6" fill="#9a8b72"/>
<ellipse cx="178.5" cy="122.9" rx="3.4" ry="2.4" fill="#a8987c"/>
<ellipse cx="162.1" cy="163.7" rx="4.0" ry="1.5" fill="#9a8b72"/>
<ellipse cx="124.4" cy="170.6" rx="4.4" ry="1.8" fill="#b9aa8e"/>
<ellipse cx="89.0" cy="159.7" rx="4.1" ry="2.8" fill="#9a8b72"/>
<ellipse cx="171.8" cy="140.9" rx="5.7" ry="2.4" fill="#a8987c"/>
<ellipse cx="131.7" cy="130.1" rx="3.5" ry="2.8" fill="#9a8b72"/>
<ellipse cx="110.3" cy="153.9" rx="3.6" ry="2.4" fill="#7d705d"/>
<ellipse cx="96.1" cy="152.9" rx="2.8" ry="2.4" fill="#7d705d"/>
<ellipse cx="139.6" cy="138.4" rx="3.7" ry="2.8" fill="#7d705d"/>
<ellipse cx="98.1" cy="118.6" rx="2.8" ry="2.1" fill="#b9aa8e"/>
<ellipse cx="116.2" cy="132.0" rx="5.3" ry="1.8" fill="#b9aa8e"/>
<ellipse cx="159.7" cy="135.4" rx="3.9" ry="2.4" fill="#7d705d"/>
<ellipse cx="111.3" cy="161.2" rx="4.2" ry="2.5" fill="#c4b79e"/>
<ellipse cx="96.7" cy="142.3" rx="4.7" ry="3.0" fill="#a8987c"/>
<ellipse cx="93.4" cy="172.2" rx="3.8" ry="2.6" fill="#7d705d"/>
<ellipse cx="180.3" cy="168.5" rx="5.6" ry="1.5" fill="#b9aa8e"/>
<ellipse cx="126.9" cy="162.0" rx="5.3" ry="3.1" fill="#7d705d"/>
<ellipse cx="84.0" cy="133.8" rx="5.7" ry="2.9" fill="#7d705d"/>
<ellipse cx="182.2" cy="122.9" rx="2.9" ry="1.8" fill="#d0c4ab"/>
<ellipse cx="182.2" cy="112.3" rx="5.4" ry="2.7" fill="#7d705d"/>
<ellipse cx="92.6" cy="163.0" rx="2.5" ry="1.7" fill="#d0c4ab"/>
<ellipse cx="176.9" cy="153.1" rx="3.6" ry="1.7" fill="#c4b79e"/>
<ellipse cx="137.4" cy="137.2" rx="5.2" ry="1.7" fill="#c4b79e"/>
<ellipse cx="137.0" cy="148.3" rx="3.9" ry="1.9" fill="#d0c4ab"/>
<ellipse cx="84.1" cy="144.8" rx="6.0" ry="2.0" fill="#c4b79e"/>
<ellipse cx="149.1" cy="171.2" rx="4.2" ry="1.9" fill="#a8987c"/>
<ellipse cx="87.0" cy="135.3" rx="4.8" ry="1.6" fill="#a8987c"/>
<ellipse cx="134.3" cy="155.3" rx="4.0" ry="1.9" fill="#9a8b72"/>
<ellipse cx="126.9" cy="132.1" rx="4.2" ry="2.7" fill="#9a8b72"/>
<ellipse cx="126.5" cy="155.9" rx="1.9" ry="1.1" fill="#4f463a"/>
<ellipse cx="158.7" cy="142.4" rx="1.9" ry="1.2" fill="#4f463a"/>
<ellipse cx="115.5" cy="166.3" rx="2.0" ry="0.7" fill="#4f463a"/>
<ellipse cx="160.8" cy="126.4" rx="3.4" ry="0.9" fill="#4f463a"/>
<ellipse cx="102.9" cy="121.0" rx="2.3" ry="1.0" fill="#4f463a"/>
<ellipse cx="179.8" cy="115.1" rx="2.3" ry="0.7" fill="#4f463a"/>
<ellipse cx="182.4" cy="114.8" rx="1.6" ry="0.6" fill="#4f463a"/>
<ellipse cx="123.7" cy="172.3" rx="3.3" ry="1.0" fill="#4f463a"/>
<ellipse cx="184.8" cy="174.8" rx="2.2" ry="0.7" fill="#4f463a"/>
<ellipse cx="178.5" cy="160.7" rx="1.6" ry="1.0" fill="#4f463a"/>
<ellipse cx="122.2" cy="132.4" rx="2.2" ry="0.7" fill="#4f463a"/>
<ellipse cx="84.3" cy="125.3" rx="2.2" ry="1.2" fill="#4f463a"/>
<ellipse cx="96.5" cy="177.3" rx="1.9" ry="0.8" fill="#4f463a"/>
<ellipse cx="167.0" cy="166.5" rx="2.4" ry="0.6" fill="#4f463a"/>
<ellipse cx="131.8" cy="132.3" rx="3.3" ry="0.7" fill="#4f463a"/>
<ellipse cx="120.8" cy="172.2" rx="1.6" ry="0.8" fill="#4f463a"/>
<ellipse cx="166.0" cy="162.3" rx="1.6" ry="0.6" fill="#4f463a"/>
<ellipse cx="90.3" cy="173.9" rx="2.0" ry="1.0" fill="#4f463a"/>
<ellipse cx="174.8" cy="129.8" rx="2.0" ry="1.2" fill="#4f463a"/>
<ellipse cx="146.3" cy="123.9" rx="2.9" ry="0.8" fill="#4f463a"/>
<ellipse cx="111.8" cy="104.3" rx="3.0" ry="1.1" fill="#4f463a"/>
<ellipse cx="148.0" cy="175.7" rx="1.5" ry="0.7" fill="#4f463a"/>
<ellipse cx="132.0" cy="176.7" rx="3.4" ry="0.8" fill="#4f463a"/>
<ellipse cx="109.4" cy="136.7" rx="2.5" ry="1.2" fill="#4f463a"/>
<ellipse cx="102.5" cy="165.0" rx="3.0" ry="1.1" fill="#4f463a"/>
<ellipse cx="162.1" cy="150.2" rx="2.2" ry="0.8" fill="#4f463a"/>
<ellipse cx="120.5" cy="163.5" rx="1.7" ry="0.7" fill="#4f463a"/>
<ellipse cx="160.0" cy="122.8" rx="1.6" ry="0.6" fill="#4f463a"/>
<ellipse cx="139.8" cy="128.8" rx="3.5" ry="1.1" fill="#4f463a"/>
<ellipse cx="183.8" cy="124.1" rx="1.7" ry="0.7" fill="#4f463a"/>
<ellipse cx="134.3" cy="157.9" rx="2.4" ry="0.7" fill="#4f463a"/>
<ellipse cx="126.1" cy="151.1" rx="2.8" ry="1.0" fill="#4f463a"/>
<ellipse cx="169.5" cy="154.5" rx="1.7" ry="1.1" fill="#4f463a"/>
<ellipse cx="113.7" cy="147.1" rx="2.2" ry="1.0" fill="#4f463a"/>
<ellipse cx="104.1" cy="122.8" rx="2.0" ry="0.7" fill="#4f463a"/>
<ellipse cx="173.3" cy="147.9" rx="2.2" ry="0.8" fill="#4f463a"/>
<ellipse cx="184.2" cy="142.6" rx="2.0" ry="1.1" fill="#4f463a"/>
<ellipse cx="150.0" cy="179.3" rx="1.7" ry="0.9" fill="#4f463a"/>
<ellipse cx="166.7" cy="167.9" rx="3.3" ry="0.6" fill="#4f463a"/>
<ellipse cx="113.7" cy="113.1" rx="1.9" ry="1.2" fill="#4f463a"/>
<ellipse cx="142.9" cy="174.7" rx="2.2" ry="1.1" fill="#4f463a"/>
<ellipse cx="129.4" cy="123.8" rx="3.1" ry="1.2" fill="#4f463a"/>
<ellipse cx="94.7" cy="149.3" rx="2.7" ry="0.7" fill="#4f463a"/>
<ellipse cx="121.2" cy="114.7" rx="1.9" ry="0.8" fill="#4f463a"/>
<ellipse cx="144.5" cy="153.5" rx="1.9" ry="0.6" fill="#4f463a"/>
<ellipse cx="117.1" cy="155.6" rx="1.9" ry="0.8" fill="#4f463a"/>
<ellipse cx="104.5" cy="164.4" rx="2.6" ry="0.6" fill="#4f463a"/>
<ellipse cx="94.2" cy="134.0" rx="2.6" ry="1.0" fill="#4f463a"/>
<ellipse cx="93.2" cy="116.4" rx="2.9" ry="0.8" fill="#4f463a"/>
<ellipse cx="112.6" cy="127.4" rx="3.4" ry="0.8" fill="#4f463a"/>
<ellipse cx="141.2" cy="131.1" rx="2.3" ry="1.1" fill="#4f463a"/>
<ellipse cx="184.7" cy="131.6" rx="1.9" ry="1.0" fill="#4f463a"/>
<ellipse cx="104.6" cy="104.4" rx="3.3" ry="0.9" fill="#4f463a"/>
<ellipse cx="166.9" cy="134.9" rx="3.3" ry="0.9" fill="#4f463a"/>
<ellipse cx="100.4" cy="105.1" rx="2.6" ry="1.0" fill="#4f463a"/>
<ellipse cx="175.9" cy="110.8" rx="2.7" ry="0.8" fill="#4f463a"/>
<ellipse cx="135.0" cy="115.1" rx="2.1" ry="0.9" fill="#4f463a"/>
<ellipse cx="177.5" cy="112.3" rx="2.5" ry="1.1" fill="#4f463a"/>
<ellipse cx="181.7" cy="119.0" rx="1.8" ry="1.2" fill="#4f463a"/>
<ellipse cx="182.5" cy="140.7" rx="1.6" ry="1.2" fill="#4f463a"/>
<ellipse cx="123.2" cy="172.7" rx="2.7" ry="1.1" fill="#4f463a"/>
<ellipse cx="100.2" cy="163.7" rx="1.9" ry="0.8" fill="#4f463a"/>
<ellipse cx="169.5" cy="167.0" rx="1.9" ry="0.7" fill="#4f463a"/>
<ellipse cx="124.4" cy="143.4" rx="2.3" ry="0.7" fill="#4f463a"/>
<ellipse cx="109.0" cy="159.1" rx="3.3" ry="0.6" fill="#4f463a"/>
<ellipse cx="140.8" cy="161.6" rx="1.6" ry="1.1" fill="#4f463a"/>
<ellipse cx="95.9" cy="149.6" rx="2.6" ry="1.0" fill="#4f463a"/>
<ellipse cx="114.9" cy="135.9" rx="2.7" ry="0.9" fill="#4f463a"/>
<ellipse cx="150.5" cy="138.0" rx="2.4" ry="0.6" fill="#4f463a"/>
<ellipse cx="146.5" cy="141.2" rx="2.0" ry="1.1" fill="#4f463a"/>
</g>
<rect x="130" y="103" width="3" height="9" fill="#2f2923"/><rect x="131.5" y="130" width="3" height="5" fill="#2f2923"/><rect x="171" y="125" width="2.5" height="4" fill="#2f2923"/>
<polygon points="134.4,58.6 79,101 186,112" fill="url(#roof)"/>
<path d="M79,102 C100,92 165,96 187,112 L185,117 C165,104 105,100 81,108 Z" fill="#2a241f"/>
<rect x="128.5" y="50" width="12" height="9" fill="#4d453e"/>
<rect x="130.5" y="51" width="1.8" height="7" fill="#d8d4cc"/><rect x="134" y="51" width="1.8" height="7" fill="#d8d4cc"/><rect x="137.5" y="51" width="1.5" height="7" fill="#c8c4bc"/>
<ellipse cx="135" cy="59" rx="9" ry="2.5" fill="#2e2823"/>
<polygon points="134.4,33.4 128,47 141,47" fill="#3b342e"/>
<ellipse cx="134.8" cy="49" rx="10" ry="3" fill="#2e2823"/>
<!-- grass -->
<path d="M0,174 C60,175 120,180 190,179 C240,184 290,193 318,196 L318,282 L0,282 Z" fill="url(#grass)"/>
<ellipse cx="248.0" cy="226.7" rx="2.6" ry="0.9" fill="#2f5f20" opacity="0.6"/>
<ellipse cx="21.3" cy="216.6" rx="1.2" ry="0.9" fill="#86b56c" opacity="0.6"/>
<ellipse cx="162.2" cy="184.2" rx="1.2" ry="1.2" fill="#2f5f20" opacity="0.6"/>
<ellipse cx="247.3" cy="232.2" rx="2.5" ry="1.3" fill="#79ad5c" opacity="0.6"/>
<ellipse cx="207.6" cy="260.0" rx="2.7" ry="1.4" fill="#79ad5c" opacity="0.6"/>
<ellipse cx="232.8" cy="263.1" rx="1.3" ry="1.3" fill="#2f5f20" opacity="0.6"/>
<ellipse cx="91.5" cy="262.7" rx="2.4" ry="1.1" fill="#2f5f20" opacity="0.6"/>
<ellipse cx="70.3" cy="265.0" rx="2.5" ry="0.6" fill="#62a043" opacity="0.6"/>
<ellipse cx="285.1" cy="208.0" rx="1.3" ry="1.0" fill="#3a6e28" opacity="0.6"/>
<ellipse cx="292.5" cy="201.2" rx="2.2" ry="0.7" fill="#86b56c" opacity="0.6"/>
<ellipse cx="118.4" cy="200.3" rx="1.3" ry="1.3" fill="#3a6e28" opacity="0.6"/>
<ellipse cx="216.1" cy="271.3" rx="2.6" ry="0.7" fill="#2f5f20" opacity="0.6"/>
<ellipse cx="244.3" cy="185.0" rx="2.9" ry="0.9" fill="#86b56c" opacity="0.6"/>
<ellipse cx="165.8" cy="250.3" rx="1.5" ry="1.0" fill="#79ad5c" opacity="0.6"/>
<ellipse cx="272.4" cy="255.3" rx="1.5" ry="1.4" fill="#86b56c" opacity="0.6"/>
<ellipse cx="183.6" cy="216.7" rx="1.9" ry="0.7" fill="#79ad5c" opacity="0.6"/>
<ellipse cx="236.5" cy="184.9" rx="1.5" ry="1.1" fill="#62a043" opacity="0.6"/>
<ellipse cx="312.9" cy="239.8" rx="2.5" ry="1.2" fill="#86b56c" opacity="0.6"/>
<ellipse cx="70.5" cy="209.7" rx="1.8" ry="0.8" fill="#3a6e28" opacity="0.6"/>
<ellipse cx="15.2" cy="229.8" rx="2.3" ry="0.5" fill="#62a043" opacity="0.6"/>
<ellipse cx="0.8" cy="216.2" rx="2.0" ry="1.0" fill="#79ad5c" opacity="0.6"/>
<ellipse cx="131.4" cy="210.7" rx="1.4" ry="1.1" fill="#2f5f20" opacity="0.6"/>
<ellipse cx="151.0" cy="193.7" rx="2.4" ry="0.9" fill="#2f5f20" opacity="0.6"/>
<ellipse cx="20.2" cy="194.8" rx="1.8" ry="0.7" fill="#86b56c" opacity="0.6"/>
<ellipse cx="3.7" cy="245.8" rx="2.8" ry="1.0" fill="#62a043" opacity="0.6"/>
<ellipse cx="184.0" cy="241.4" rx="2.5" ry="0.7" fill="#62a043" opacity="0.6"/>
<ellipse cx="287.3" cy="184.5" rx="1.1" ry="0.7" fill="#62a043" opacity="0.6"/>
<ellipse cx="50.6" cy="273.0" rx="1.0" ry="1.0" fill="#79ad5c" opacity="0.6"/>
<ellipse cx="299.2" cy="194.5" rx="2.0" ry="1.1" fill="#2f5f20" opacity="0.6"/>
<ellipse cx="205.9" cy="222.4" rx="1.3" ry="0.8" fill="#62a043" opacity="0.6"/>
<ellipse cx="95.5" cy="184.9" rx="2.4" ry="0.5" fill="#3a6e28" opacity="0.6"/>
<ellipse cx="268.5" cy="256.0" rx="1.2" ry="1.1" fill="#3a6e28" opacity="0.6"/>
<ellipse cx="55.8" cy="281.7" rx="1.5" ry="0.5" fill="#86b56c" opacity="0.6"/>
<ellipse cx="106.7" cy="256.5" rx="2.4" ry="0.7" fill="#86b56c" opacity="0.6"/>
<ellipse cx="176.1" cy="224.5" rx="2.9" ry="0.8" fill="#62a043" opacity="0.6"/>
<ellipse cx="295.3" cy="271.2" rx="2.8" ry="0.5" fill="#79ad5c" opacity="0.6"/>
<ellipse cx="82.8" cy="204.1" rx="2.9" ry="1.2" fill="#2f5f20" opacity="0.6"/>
<ellipse cx="103.9" cy="269.8" rx="2.2" ry="0.8" fill="#86b56c" opacity="0.6"/>
<ellipse cx="270.9" cy="274.0" rx="1.9" ry="1.3" fill="#62a043" opacity="0.6"/>
<ellipse cx="221.8" cy="267.5" rx="2.9" ry="0.7" fill="#3a6e28" opacity="0.6"/>
<ellipse cx="281.4" cy="260.5" rx="2.2" ry="0.6" fill="#3a6e28" opacity="0.6"/>
<ellipse cx="289.6" cy="194.7" rx="1.2" ry="1.1" fill="#79ad5c" opacity="0.6"/>
<ellipse cx="51.5" cy="279.7" rx="1.1" ry="0.6" fill="#79ad5c" opacity="0.6"/>
<ellipse cx="204.6" cy="184.3" rx="2.5" ry="0.6" fill="#79ad5c" opacity="0.6"/>
<ellipse cx="187.8" cy="217.1" rx="2.8" ry="0.6" fill="#62a043" opacity="0.6"/>
<ellipse cx="276.0" cy="273.3" rx="1.2" ry="0.7" fill="#3a6e28" opacity="0.6"/>
<ellipse cx="35.6" cy="183.5" rx="2.7" ry="1.1" fill="#79ad5c" opacity="0.6"/>
<ellipse cx="91.4" cy="190.2" rx="2.6" ry="1.1" fill="#79ad5c" opacity="0.6"/>
<ellipse cx="93.6" cy="214.3" rx="1.0" ry="0.7" fill="#86b56c" opacity="0.6"/>
<ellipse cx="89.9" cy="253.0" rx="2.8" ry="1.2" fill="#86b56c" opacity="0.6"/>
<ellipse cx="191.4" cy="228.6" rx="2.2" ry="0.5" fill="#86b56c" opacity="0.6"/>
<ellipse cx="131.3" cy="224.5" rx="1.7" ry="1.1" fill="#79ad5c" opacity="0.6"/>
<ellipse cx="171.0" cy="202.1" rx="2.1" ry="0.8" fill="#79ad5c" opacity="0.6"/>
<ellipse cx="138.7" cy="233.4" rx="2.5" ry="1.4" fill="#86b56c" opacity="0.6"/>
<ellipse cx="1.4" cy="230.1" rx="2.4" ry="1.2" fill="#3a6e28" opacity="0.6"/>
<ellipse cx="307.6" cy="240.4" rx="1.5" ry="1.3" fill="#62a043" opacity="0.6"/>
<ellipse cx="90.2" cy="201.9" rx="2.0" ry="0.6" fill="#2f5f20" opacity="0.6"/>
<ellipse cx="202.4" cy="188.3" rx="2.6" ry="1.1" fill="#62a043" opacity="0.6"/>
<ellipse cx="113.1" cy="220.9" rx="2.8" ry="1.2" fill="#3a6e28" opacity="0.6"/>
<ellipse cx="134.2" cy="245.9" rx="1.4" ry="0.7" fill="#86b56c" opacity="0.6"/>
<ellipse cx="286.6" cy="231.1" rx="3.0" ry="1.1" fill="#3a6e28" opacity="0.6"/>
<ellipse cx="300.2" cy="192.9" rx="2.5" ry="1.2" fill="#62a043" opacity="0.6"/>
<ellipse cx="205.5" cy="215.5" rx="2.0" ry="1.3" fill="#86b56c" opacity="0.6"/>
<ellipse cx="143.2" cy="236.5" rx="1.3" ry="0.9" fill="#86b56c" opacity="0.6"/>
<ellipse cx="246.0" cy="239.1" rx="1.7" ry="1.1" fill="#2f5f20" opacity="0.6"/>
<ellipse cx="221.5" cy="231.8" rx="1.6" ry="1.1" fill="#86b56c" opacity="0.6"/>
<ellipse cx="268.3" cy="195.8" rx="2.9" ry="1.2" fill="#2f5f20" opacity="0.6"/>
<ellipse cx="191.7" cy="215.6" rx="1.7" ry="0.7" fill="#2f5f20" opacity="0.6"/>
<ellipse cx="310.1" cy="254.3" rx="1.3" ry="1.1" fill="#79ad5c" opacity="0.6"/>
<ellipse cx="62.1" cy="195.4" rx="2.6" ry="1.2" fill="#2f5f20" opacity="0.6"/>
<ellipse cx="138.3" cy="200.0" rx="1.6" ry="1.3" fill="#79ad5c" opacity="0.6"/>
<ellipse cx="147.5" cy="181.3" rx="2.4" ry="1.0" fill="#3a6e28" opacity="0.6"/>
<ellipse cx="201.1" cy="227.3" rx="1.5" ry="1.2" fill="#2f5f20" opacity="0.6"/>
<ellipse cx="1.8" cy="204.7" rx="2.4" ry="1.0" fill="#3a6e28" opacity="0.6"/>
<ellipse cx="205.8" cy="266.3" rx="2.7" ry="1.1" fill="#62a043" opacity="0.6"/>
<ellipse cx="204.0" cy="226.3" rx="1.5" ry="1.1" fill="#86b56c" opacity="0.6"/>
<ellipse cx="284.5" cy="204.7" rx="2.4" ry="1.1" fill="#3a6e28" opacity="0.6"/>
<ellipse cx="79.5" cy="223.2" rx="1.0" ry="1.3" fill="#3a6e28" opacity="0.6"/>
<ellipse cx="164.8" cy="247.4" rx="2.8" ry="0.8" fill="#2f5f20" opacity="0.6"/>
<ellipse cx="3.4" cy="264.9" rx="1.1" ry="1.0" fill="#79ad5c" opacity="0.6"/>
<ellipse cx="51.1" cy="259.7" rx="2.0" ry="0.6" fill="#2f5f20" opacity="0.6"/>
<ellipse cx="182.7" cy="235.2" rx="2.0" ry="1.1" fill="#3a6e28" opacity="0.6"/>
<ellipse cx="263.6" cy="233.2" rx="2.5" ry="0.9" fill="#3a6e28" opacity="0.6"/>
<ellipse cx="314.9" cy="198.7" rx="2.5" ry="0.6" fill="#62a043" opacity="0.6"/>
<ellipse cx="313.1" cy="216.3" rx="1.5" ry="0.8" fill="#79ad5c" opacity="0.6"/>
<ellipse cx="19.6" cy="187.7" rx="2.3" ry="1.1" fill="#3a6e28" opacity="0.6"/>
<ellipse cx="184.5" cy="191.1" rx="2.5" ry="1.3" fill="#86b56c" opacity="0.6"/>
<ellipse cx="167.6" cy="202.3" rx="1.9" ry="0.6" fill="#3a6e28" opacity="0.6"/>
<ellipse cx="295.6" cy="187.0" rx="1.9" ry="1.0" fill="#2f5f20" opacity="0.6"/>
<ellipse cx="71.9" cy="278.3" rx="2.3" ry="1.2" fill="#86b56c" opacity="0.6"/>
<ellipse cx="252.9" cy="222.2" rx="2.5" ry="1.1" fill="#86b56c" opacity="0.6"/>
<ellipse cx="248.0" cy="227.9" rx="1.5" ry="0.8" fill="#2f5f20" opacity="0.6"/>
<ellipse cx="80.6" cy="223.5" rx="2.0" ry="1.2" fill="#2f5f20" opacity="0.6"/>
<ellipse cx="254.1" cy="216.5" rx="1.6" ry="0.9" fill="#86b56c" opacity="0.6"/>
<ellipse cx="198.2" cy="188.7" rx="1.3" ry="0.8" fill="#86b56c" opacity="0.6"/>
<ellipse cx="122.5" cy="188.7" rx="2.8" ry="1.2" fill="#62a043" opacity="0.6"/>
<ellipse cx="44.6" cy="264.8" rx="1.0" ry="0.5" fill="#62a043" opacity="0.6"/>
<ellipse cx="302.7" cy="246.9" rx="2.2" ry="1.0" fill="#86b56c" opacity="0.6"/>
<ellipse cx="271.6" cy="198.9" rx="1.7" ry="0.6" fill="#3a6e28" opacity="0.6"/>
<ellipse cx="287.5" cy="260.8" rx="2.2" ry="1.1" fill="#2f5f20" opacity="0.6"/>
<ellipse cx="310.7" cy="189.2" rx="2.6" ry="1.3" fill="#62a043" opacity="0.6"/>
<ellipse cx="62.8" cy="250.7" rx="1.2" ry="1.3" fill="#62a043" opacity="0.6"/>
<ellipse cx="213.5" cy="191.9" rx="1.5" ry="0.7" fill="#79ad5c" opacity="0.6"/>
<ellipse cx="44.3" cy="230.3" rx="2.0" ry="1.3" fill="#79ad5c" opacity="0.6"/>
<ellipse cx="222.7" cy="205.1" rx="2.1" ry="1.3" fill="#2f5f20" opacity="0.6"/>
<ellipse cx="2.1" cy="265.8" rx="2.4" ry="0.9" fill="#3a6e28" opacity="0.6"/>
<ellipse cx="94.4" cy="227.5" rx="1.8" ry="1.4" fill="#3a6e28" opacity="0.6"/>
<ellipse cx="24.0" cy="245.0" rx="1.0" ry="0.5" fill="#79ad5c" opacity="0.6"/>
<ellipse cx="234.2" cy="281.9" rx="2.0" ry="0.9" fill="#79ad5c" opacity="0.6"/>
<ellipse cx="285.4" cy="183.5" rx="2.3" ry="0.8" fill="#3a6e28" opacity="0.6"/>
<ellipse cx="274.0" cy="217.3" rx="2.6" ry="1.0" fill="#3a6e28" opacity="0.6"/>
<ellipse cx="290.1" cy="209.0" rx="1.8" ry="1.0" fill="#86b56c" opacity="0.6"/>
<ellipse cx="262.9" cy="209.9" rx="1.8" ry="1.0" fill="#3a6e28" opacity="0.6"/>
<ellipse cx="86.4" cy="231.7" rx="2.3" ry="1.2" fill="#2f5f20" opacity="0.6"/>
<ellipse cx="105.2" cy="212.3" rx="1.3" ry="1.4" fill="#86b56c" opacity="0.6"/>
<ellipse cx="27.8" cy="281.6" rx="2.4" ry="1.3" fill="#3a6e28" opacity="0.6"/>
<ellipse cx="173.4" cy="185.1" rx="1.2" ry="0.5" fill="#86b56c" opacity="0.6"/>
<ellipse cx="261.4" cy="228.5" rx="2.6" ry="1.3" fill="#79ad5c" opacity="0.6"/>
<ellipse cx="194.5" cy="242.9" rx="2.8" ry="0.6" fill="#62a043" opacity="0.6"/>
<ellipse cx="12.6" cy="244.6" rx="1.2" ry="0.7" fill="#2f5f20" opacity="0.6"/>
<ellipse cx="11.8" cy="259.0" rx="1.7" ry="1.2" fill="#79ad5c" opacity="0.6"/>
<ellipse cx="250.1" cy="237.3" rx="2.7" ry="0.7" fill="#86b56c" opacity="0.6"/>
<ellipse cx="10.9" cy="182.1" rx="2.3" ry="1.3" fill="#62a043" opacity="0.6"/>
<ellipse cx="17.4" cy="237.9" rx="2.6" ry="1.2" fill="#79ad5c" opacity="0.6"/>
<ellipse cx="133.9" cy="251.0" rx="1.9" ry="0.5" fill="#3a6e28" opacity="0.6"/>
<ellipse cx="123.1" cy="240.4" rx="2.0" ry="0.9" fill="#2f5f20" opacity="0.6"/>
<ellipse cx="32.4" cy="245.7" rx="2.8" ry="1.1" fill="#2f5f20" opacity="0.6"/>
<ellipse cx="135.8" cy="181.0" rx="3.0" ry="1.3" fill="#79ad5c" opacity="0.6"/>
<ellipse cx="69.4" cy="192.4" rx="1.0" ry="1.1" fill="#3a6e28" opacity="0.6"/>
<ellipse cx="77.0" cy="254.8" rx="2.8" ry="0.8" fill="#2f5f20" opacity="0.6"/>
<ellipse cx="237.6" cy="250.9" rx="2.5" ry="0.6" fill="#2f5f20" opacity="0.6"/>
<ellipse cx="199.9" cy="252.3" rx="2.3" ry="1.3" fill="#3a6e28" opacity="0.6"/>
<ellipse cx="290.5" cy="185.4" rx="1.0" ry="0.5" fill="#79ad5c" opacity="0.6"/>
<ellipse cx="206.9" cy="263.4" rx="1.8" ry="0.8" fill="#79ad5c" opacity="0.6"/>
<ellipse cx="190.8" cy="277.7" rx="2.2" ry="0.8" fill="#3a6e28" opacity="0.6"/>
<ellipse cx="301.7" cy="254.2" rx="2.4" ry="0.6" fill="#3a6e28" opacity="0.6"/>
<ellipse cx="253.6" cy="217.1" rx="2.3" ry="0.9" fill="#2f5f20" opacity="0.6"/>
<ellipse cx="122.7" cy="260.2" rx="2.6" ry="1.0" fill="#86b56c" opacity="0.6"/>
<ellipse cx="93.0" cy="186.2" rx="1.7" ry="1.0" fill="#62a043" opacity="0.6"/>
<ellipse cx="310.8" cy="264.8" rx="2.7" ry="1.0" fill="#62a043" opacity="0.6"/>
<ellipse cx="310.5" cy="205.1" rx="2.4" ry="1.0" fill="#3a6e28" opacity="0.6"/>
<ellipse cx="285.0" cy="262.4" rx="2.4" ry="0.8" fill="#86b56c" opacity="0.6"/>
<ellipse cx="85.2" cy="196.0" rx="1.6" ry="0.6" fill="#79ad5c" opacity="0.6"/>
<ellipse cx="283.2" cy="281.3" rx="1.5" ry="1.3" fill="#2f5f20" opacity="0.6"/>
<ellipse cx="256.6" cy="249.8" rx="1.7" ry="0.6" fill="#3a6e28" opacity="0.6"/>
<ellipse cx="176.1" cy="261.3" rx="2.6" ry="1.1" fill="#2f5f20" opacity="0.6"/>
<ellipse cx="312.4" cy="211.6" rx="2.4" ry="0.9" fill="#79ad5c" opacity="0.6"/>
<ellipse cx="65.7" cy="206.0" rx="2.6" ry="0.9" fill="#79ad5c" opacity="0.6"/>
<ellipse cx="27.9" cy="262.3" rx="1.5" ry="1.0" fill="#79ad5c" opacity="0.6"/>
<ellipse cx="285.2" cy="270.3" rx="1.6" ry="1.0" fill="#62a043" opacity="0.6"/>
<ellipse cx="64.2" cy="201.7" rx="1.4" ry="1.1" fill="#79ad5c" opacity="0.6"/>
<ellipse cx="115.4" cy="237.6" rx="2.6" ry="1.3" fill="#3a6e28" opacity="0.6"/>
<ellipse cx="78.3" cy="274.1" rx="1.7" ry="0.6" fill="#3a6e28" opacity="0.6"/>
<ellipse cx="201.2" cy="260.3" rx="1.6" ry="0.5" fill="#2f5f20" opacity="0.6"/>
<ellipse cx="89.2" cy="241.9" rx="1.1" ry="1.4" fill="#79ad5c" opacity="0.6"/>
<ellipse cx="275.4" cy="229.6" rx="1.4" ry="1.3" fill="#62a043" opacity="0.6"/>
<ellipse cx="89.0" cy="189.9" rx="2.5" ry="1.2" fill="#3a6e28" opacity="0.6"/>
<ellipse cx="306.4" cy="205.9" rx="1.7" ry="1.4" fill="#79ad5c" opacity="0.6"/>
<ellipse cx="120.3" cy="182.8" rx="2.1" ry="1.3" fill="#79ad5c" opacity="0.6"/>
<ellipse cx="145.7" cy="276.6" rx="2.7" ry="1.1" fill="#79ad5c" opacity="0.6"/>
<ellipse cx="293.2" cy="252.1" rx="1.5" ry="1.0" fill="#79ad5c" opacity="0.6"/>
<ellipse cx="203.7" cy="277.6" rx="1.8" ry="0.9" fill="#62a043" opacity="0.6"/>
<ellipse cx="50.8" cy="278.5" rx="1.3" ry="1.3" fill="#2f5f20" opacity="0.6"/>
<ellipse cx="299.3" cy="186.0" rx="2.8" ry="1.3" fill="#62a043" opacity="0.6"/>
<ellipse cx="15.0" cy="260.2" rx="1.1" ry="0.6" fill="#3a6e28" opacity="0.6"/>
<ellipse cx="240.1" cy="275.8" rx="2.2" ry="0.9" fill="#86b56c" opacity="0.6"/>
<ellipse cx="207.5" cy="228.0" rx="1.5" ry="0.6" fill="#86b56c" opacity="0.6"/>
<ellipse cx="153.1" cy="197.2" rx="2.6" ry="1.3" fill="#2f5f20" opacity="0.6"/>
<ellipse cx="283.7" cy="227.7" rx="2.6" ry="0.6" fill="#2f5f20" opacity="0.6"/>
<ellipse cx="264.8" cy="187.9" rx="2.7" ry="1.3" fill="#62a043" opacity="0.6"/>
<ellipse cx="44.4" cy="225.6" rx="2.9" ry="0.8" fill="#79ad5c" opacity="0.6"/>
<ellipse cx="6.9" cy="187.7" rx="1.6" ry="0.7" fill="#86b56c" opacity="0.6"/>
<ellipse cx="36.8" cy="217.3" rx="1.4" ry="0.6" fill="#86b56c" opacity="0.6"/>
<ellipse cx="227.0" cy="236.4" rx="1.9" ry="0.6" fill="#2f5f20" opacity="0.6"/>
<ellipse cx="133.0" cy="205.2" rx="1.5" ry="1.3" fill="#79ad5c" opacity="0.6"/>
<ellipse cx="106.4" cy="197.1" rx="1.2" ry="0.9" fill="#3a6e28" opacity="0.6"/>
<ellipse cx="153.4" cy="195.6" rx="1.1" ry="1.3" fill="#62a043" opacity="0.6"/>
<ellipse cx="212.5" cy="201.5" rx="2.7" ry="0.6" fill="#3a6e28" opacity="0.6"/>
<ellipse cx="240.0" cy="279.0" rx="3.0" ry="1.4" fill="#3a6e28" opacity="0.6"/>
<ellipse cx="294.2" cy="190.0" rx="1.8" ry="0.6" fill="#86b56c" opacity="0.6"/>
<ellipse cx="264.7" cy="279.8" rx="3.0" ry="0.5" fill="#2f5f20" opacity="0.6"/>
<ellipse cx="256.6" cy="214.8" rx="1.9" ry="1.2" fill="#2f5f20" opacity="0.6"/>
<ellipse cx="300.1" cy="209.2" rx="1.9" ry="1.3" fill="#86b56c" opacity="0.6"/>
<ellipse cx="69.4" cy="238.3" rx="2.7" ry="1.0" fill="#2f5f20" opacity="0.6"/>
<ellipse cx="73.3" cy="197.9" rx="1.2" ry="0.6" fill="#62a043" opacity="0.6"/>
<ellipse cx="193.5" cy="230.5" rx="1.4" ry="0.6" fill="#86b56c" opacity="0.6"/>
<ellipse cx="213.0" cy="244.1" rx="2.2" ry="0.7" fill="#2f5f20" opacity="0.6"/>
<ellipse cx="20.9" cy="254.7" rx="2.7" ry="1.3" fill="#3a6e28" opacity="0.6"/>
<ellipse cx="164.9" cy="215.5" rx="2.7" ry="1.3" fill="#86b56c" opacity="0.6"/>
<ellipse cx="156.8" cy="181.6" rx="1.3" ry="1.1" fill="#3a6e28" opacity="0.6"/>
<ellipse cx="79.0" cy="237.4" rx="1.1" ry="1.1" fill="#86b56c" opacity="0.6"/>
<ellipse cx="182.8" cy="267.5" rx="2.0" ry="0.9" fill="#86b56c" opacity="0.6"/>
<ellipse cx="164.0" cy="192.3" rx="2.6" ry="1.3" fill="#2f5f20" opacity="0.6"/>
<ellipse cx="102.1" cy="252.5" rx="2.2" ry="1.3" fill="#3a6e28" opacity="0.6"/>
<ellipse cx="92.7" cy="191.0" rx="1.9" ry="0.5" fill="#3a6e28" opacity="0.6"/>
<ellipse cx="255.8" cy="193.7" rx="2.9" ry="0.7" fill="#2f5f20" opacity="0.6"/>
<ellipse cx="58.0" cy="190.5" rx="2.1" ry="1.4" fill="#86b56c" opacity="0.6"/>
<ellipse cx="6.2" cy="274.5" rx="1.5" ry="1.3" fill="#2f5f20" opacity="0.6"/>
<ellipse cx="202.5" cy="227.3" rx="2.4" ry="0.6" fill="#2f5f20" opacity="0.6"/>
<ellipse cx="276.5" cy="253.1" rx="1.5" ry="0.9" fill="#79ad5c" opacity="0.6"/>
<ellipse cx="186.3" cy="257.7" rx="1.2" ry="0.9" fill="#79ad5c" opacity="0.6"/>
<ellipse cx="43.6" cy="240.4" rx="1.3" ry="1.0" fill="#2f5f20" opacity="0.6"/>
<ellipse cx="237.4" cy="196.8" rx="2.9" ry="0.8" fill="#79ad5c" opacity="0.6"/>
<ellipse cx="133.7" cy="265.7" rx="1.1" ry="1.4" fill="#62a043" opacity="0.6"/>
<ellipse cx="16.5" cy="217.1" rx="1.5" ry="0.8" fill="#3a6e28" opacity="0.6"/>
<ellipse cx="138.5" cy="280.1" rx="2.6" ry="1.3" fill="#86b56c" opacity="0.6"/>
<ellipse cx="17.0" cy="232.8" rx="1.5" ry="0.9" fill="#86b56c" opacity="0.6"/>
<ellipse cx="201.2" cy="217.2" rx="1.4" ry="0.8" fill="#62a043" opacity="0.6"/>
<ellipse cx="63.8" cy="248.3" rx="1.3" ry="1.4" fill="#2f5f20" opacity="0.6"/>
<ellipse cx="247.0" cy="275.6" rx="2.6" ry="1.3" fill="#79ad5c" opacity="0.6"/>
<ellipse cx="281.3" cy="183.5" rx="1.5" ry="1.1" fill="#62a043" opacity="0.6"/>
<ellipse cx="87.0" cy="235.3" rx="2.2" ry="0.7" fill="#79ad5c" opacity="0.6"/>
<ellipse cx="165.5" cy="224.2" rx="1.6" ry="0.8" fill="#79ad5c" opacity="0.6"/>
<ellipse cx="205.9" cy="192.3" rx="2.9" ry="1.3" fill="#62a043" opacity="0.6"/>
<ellipse cx="286.7" cy="188.6" rx="2.1" ry="0.6" fill="#62a043" opacity="0.6"/>
<ellipse cx="39.4" cy="193.4" rx="2.8" ry="1.0" fill="#86b56c" opacity="0.6"/>
<ellipse cx="87.2" cy="255.1" rx="1.6" ry="0.9" fill="#62a043" opacity="0.6"/>
<ellipse cx="221.0" cy="202.6" rx="1.4" ry="1.1" fill="#3a6e28" opacity="0.6"/>
<ellipse cx="146.6" cy="235.9" rx="2.0" ry="1.2" fill="#62a043" opacity="0.6"/>
<ellipse cx="9.8" cy="214.0" rx="2.0" ry="0.8" fill="#2f5f20" opacity="0.6"/>
<ellipse cx="186.2" cy="181.2" rx="1.3" ry="1.4" fill="#86b56c" opacity="0.6"/>
<ellipse cx="103.0" cy="213.2" rx="1.6" ry="1.4" fill="#86b56c" opacity="0.6"/>
<ellipse cx="94.0" cy="258.8" rx="2.1" ry="1.0" fill="#2f5f20" opacity="0.6"/>
<ellipse cx="110.7" cy="247.1" rx="1.8" ry="0.9" fill="#62a043" opacity="0.6"/>
<ellipse cx="233.9" cy="191.1" rx="3.0" ry="1.1" fill="#2f5f20" opacity="0.6"/>
<ellipse cx="297.0" cy="222.5" rx="1.3" ry="0.7" fill="#86b56c" opacity="0.6"/>
<ellipse cx="194.2" cy="208.2" rx="1.2" ry="1.3" fill="#62a043" opacity="0.6"/>
<ellipse cx="293.2" cy="281.6" rx="2.6" ry="1.1" fill="#86b56c" opacity="0.6"/>
<ellipse cx="290.9" cy="193.0" rx="1.0" ry="1.2" fill="#79ad5c" opacity="0.6"/>
<ellipse cx="186.3" cy="230.8" rx="1.3" ry="1.3" fill="#62a043" opacity="0.6"/>
<ellipse cx="88.8" cy="243.4" rx="1.8" ry="0.9" fill="#79ad5c" opacity="0.6"/>
<ellipse cx="145.6" cy="253.8" rx="1.7" ry="1.0" fill="#86b56c" opacity="0.6"/>
<ellipse cx="189.3" cy="246.1" rx="2.6" ry="1.3" fill="#79ad5c" opacity="0.6"/>
<ellipse cx="158.9" cy="225.3" rx="2.1" ry="1.2" fill="#2f5f20" opacity="0.6"/>
<ellipse cx="138.5" cy="218.5" rx="1.2" ry="1.3" fill="#2f5f20" opacity="0.6"/>
<ellipse cx="103.0" cy="266.0" rx="2.9" ry="0.7" fill="#2f5f20" opacity="0.6"/>
<ellipse cx="135.6" cy="272.9" rx="1.1" ry="0.7" fill="#79ad5c" opacity="0.6"/>
<ellipse cx="284.9" cy="210.6" rx="2.5" ry="1.0" fill="#62a043" opacity="0.6"/>
<ellipse cx="317.5" cy="232.8" rx="2.5" ry="0.9" fill="#62a043" opacity="0.6"/>
<ellipse cx="147.6" cy="184.2" rx="1.9" ry="0.5" fill="#86b56c" opacity="0.6"/>
<ellipse cx="21.7" cy="203.4" rx="1.7" ry="0.9" fill="#3a6e28" opacity="0.6"/>
<ellipse cx="178.5" cy="238.6" rx="2.9" ry="0.9" fill="#2f5f20" opacity="0.6"/>
<ellipse cx="140.0" cy="243.7" rx="1.7" ry="1.0" fill="#62a043" opacity="0.6"/>
<ellipse cx="259.5" cy="197.4" rx="1.7" ry="0.6" fill="#86b56c" opacity="0.6"/>
<ellipse cx="98.8" cy="197.9" rx="2.4" ry="1.2" fill="#86b56c" opacity="0.6"/>
<ellipse cx="314.9" cy="270.6" rx="2.3" ry="1.0" fill="#3a6e28" opacity="0.6"/>
<ellipse cx="259.5" cy="201.2" rx="1.8" ry="0.6" fill="#2f5f20" opacity="0.6"/>
<ellipse cx="179.7" cy="190.9" rx="3.0" ry="1.1" fill="#62a043" opacity="0.6"/>
<ellipse cx="13.5" cy="222.0" rx="1.6" ry="1.1" fill="#79ad5c" opacity="0.6"/>
<ellipse cx="1.2" cy="211.1" rx="2.2" ry="1.1" fill="#79ad5c" opacity="0.6"/>
<ellipse cx="62.5" cy="230.8" rx="2.1" ry="1.3" fill="#62a043" opacity="0.6"/>
<ellipse cx="284.8" cy="232.5" rx="2.1" ry="0.9" fill="#2f5f20" opacity="0.6"/>
<ellipse cx="38.6" cy="196.0" rx="1.2" ry="0.6" fill="#62a043" opacity="0.6"/>
<ellipse cx="54.2" cy="233.3" rx="2.2" ry="1.2" fill="#3a6e28" opacity="0.6"/>
<ellipse cx="19.8" cy="181.3" rx="1.6" ry="1.1" fill="#62a043" opacity="0.6"/>
<ellipse cx="112.5" cy="197.3" rx="2.3" ry="1.3" fill="#86b56c" opacity="0.6"/>
<ellipse cx="301.4" cy="186.4" rx="1.9" ry="0.8" fill="#2f5f20" opacity="0.6"/>
<ellipse cx="17.4" cy="270.8" rx="2.5" ry="0.5" fill="#62a043" opacity="0.6"/>
<ellipse cx="17.4" cy="204.3" rx="1.1" ry="1.3" fill="#2f5f20" opacity="0.6"/>
<ellipse cx="271.8" cy="212.1" rx="1.6" ry="1.0" fill="#3a6e28" opacity="0.6"/>
<path d="M0,199 C100,201 200,203 318,205 L318,214 C200,210 100,214 0,216 Z" fill="#2f6a1c" opacity="0.45"/>
<path d="M0,228 C90,225 200,217 318,208" stroke="#7db067" stroke-width="1.6" fill="none" opacity="0.7"/>
<g fill="#7a776f">
<ellipse cx="76" cy="193" rx="5.5" ry="3.5"/><ellipse cx="89" cy="193" rx="5.5" ry="3.5"/><ellipse cx="100" cy="196" rx="3" ry="2"/><ellipse cx="122" cy="197" rx="5" ry="2.8"/><ellipse cx="140" cy="198" rx="5" ry="2.8"/><ellipse cx="170" cy="198.5" rx="8" ry="2.3" fill="#8c8a84"/>
</g>
</svg>
<div class="a" style="left:402px;top:469px;width:340px;height:223px;background:#fff;border:2px solid #333;box-sizing:border-box;"></div>
<div class="a" style="left:404px;top:514px;width:336px;height:1px;background:#eee3dc;"></div>
<svg style="left:413px;top:478px;" width="25" height="30" viewBox="433 495 25 30"><rect x="434.7" y="496.7" width="21.6" height="26.6" fill="#fff" stroke="#999" stroke-width="1.4"/><line x1="438.8" y1="502.60" x2="452.2" y2="502.60" stroke="#999" stroke-width="1.5"/><line x1="438.8" y1="507.15" x2="452.2" y2="507.15" stroke="#999" stroke-width="1.5"/><line x1="438.8" y1="511.70" x2="452.2" y2="511.70" stroke="#999" stroke-width="1.5"/><line x1="438.8" y1="516.25" x2="452.2" y2="516.25" stroke="#999" stroke-width="1.5"/></svg>
<div class="t" style="left:451.10px;top:484.39px;font-size:19.5px;color:#111;letter-spacing:0.240px;-webkit-text-stroke:0.65px #111;">First Son Off His Hands</div>
<div class="t" style="left:412.50px;top:526.19px;font-size:16.2px;color:#111;letter-spacing:0.584px;-webkit-text-stroke:0.2px #111;">Servants and relatives raise Dmitri.</div>
<div class="t" style="left:412.50px;top:550.99px;font-size:16.2px;color:#111;letter-spacing:0.584px;-webkit-text-stroke:0.2px #111;">Dmitri led to believe he has an</div>
<div class="t" style="left:412.50px;top:575.79px;font-size:16.2px;color:#111;letter-spacing:0.584px;-webkit-text-stroke:0.2px #111;">inheritance. Fyodor sends him small</div>
<div class="t" style="left:412.50px;top:600.59px;font-size:16.2px;color:#111;letter-spacing:0.584px;-webkit-text-stroke:0.2px #111;">amounts, then tells him it’s all gone.</div>
<div class="t" style="left:412.50px;top:625.39px;font-size:16.2px;color:#111;letter-spacing:0.584px;-webkit-text-stroke:0.2px #111;">Dmitri believes his father is cheating</div>
<div class="t" style="left:412.50px;top:650.19px;font-size:16.2px;color:#111;letter-spacing:0.584px;-webkit-text-stroke:0.2px #111;">him, and stays in town to get what’s his.</div>
<div class="a" style="left:783px;top:471px;width:337px;height:219px;background:#fff;box-shadow:0 0.5px 1.5px rgba(0,0,0,.35);"></div>
<div class="a" style="left:783px;top:514px;width:337px;height:1px;background:#eee3dc;"></div>
<svg style="left:792px;top:478px;" width="25" height="30" viewBox="812 495 25 30"><rect x="813.7" y="496.7" width="21.6" height="26.6" fill="#fff" stroke="#999" stroke-width="1.4"/><line x1="817.8" y1="502.60" x2="831.2" y2="502.60" stroke="#999" stroke-width="1.5"/><line x1="817.8" y1="507.15" x2="831.2" y2="507.15" stroke="#999" stroke-width="1.5"/><line x1="817.8" y1="511.70" x2="831.2" y2="511.70" stroke="#999" stroke-width="1.5"/><line x1="817.8" y1="516.25" x2="831.2" y2="516.25" stroke="#999" stroke-width="1.5"/></svg>
<div class="t" style="left:830.40px;top:484.39px;font-size:19.5px;color:#111;letter-spacing:0.099px;-webkit-text-stroke:0.65px #111;">Second Marriage, Second Ch…</div>
<div class="t" style="left:791.60px;top:526.19px;font-size:16.2px;color:#111;letter-spacing:0.584px;-webkit-text-stroke:0.2px #111;">Fyodor marries 16 yr-old Sofia</div>
<div class="t" style="left:791.60px;top:550.99px;font-size:16.2px;color:#111;letter-spacing:0.584px;-webkit-text-stroke:0.2px #111;">(elopement). Treats her badly</div>
<div class="t" style="left:791.60px;top:575.79px;font-size:16.2px;color:#111;letter-spacing:0.584px;-webkit-text-stroke:0.2px #111;">(“shrieker”). She dies after having Ivan</div>
<div class="t" style="left:791.60px;top:600.59px;font-size:16.2px;color:#111;letter-spacing:0.584px;-webkit-text-stroke:0.2px #111;">and Alyosha. Raised by Sofia’s guardian.</div>
<div class="t" style="left:791.60px;top:625.39px;font-size:16.2px;color:#111;letter-spacing:0.584px;-webkit-text-stroke:0.2px #111;">Ivan becomes a brilliant student, and</div>
<div class="t" style="left:791.60px;top:650.19px;font-size:16.2px;color:#111;letter-spacing:0.584px;-webkit-text-stroke:0.2px #111;">Dmitri seeks his help in mediating with…</div>
<div class="a" style="left:404px;top:731px;width:337px;height:219px;background:#fff;box-shadow:0 0.5px 1.5px rgba(0,0,0,.35);"></div>
<div class="a" style="left:404px;top:774px;width:337px;height:1px;background:#eee3dc;"></div>
<svg style="left:413px;top:738px;" width="25" height="30" viewBox="433 755 25 30"><rect x="434.7" y="756.7" width="21.6" height="26.6" fill="#fff" stroke="#999" stroke-width="1.4"/><line x1="438.8" y1="762.60" x2="452.2" y2="762.60" stroke="#999" stroke-width="1.5"/><line x1="438.8" y1="767.15" x2="452.2" y2="767.15" stroke="#999" stroke-width="1.5"/><line x1="438.8" y1="771.70" x2="452.2" y2="771.70" stroke="#999" stroke-width="1.5"/><line x1="438.8" y1="776.25" x2="452.2" y2="776.25" stroke="#999" stroke-width="1.5"/></svg>
<div class="t" style="left:451.70px;top:743.09px;font-size:19.5px;color:#111;letter-spacing:0.257px;-webkit-text-stroke:0.65px #111;">The Third Son, Alyosha</div>
<div class="t" style="left:413.50px;top:785.39px;font-size:16.2px;color:#111;letter-spacing:0.584px;-webkit-text-stroke:0.2px #111;">Alyosha, 20, has been living at</div>
<div class="t" style="left:413.50px;top:810.19px;font-size:16.2px;color:#111;letter-spacing:0.584px;-webkit-text-stroke:0.2px #111;">monastery. Generous, kind, innocent.</div>
<div class="t" style="left:413.50px;top:834.99px;font-size:16.2px;color:#111;letter-spacing:0.584px;-webkit-text-stroke:0.2px #111;">Moves back and grows close to his</div>
<div class="a" style="left:781px;top:731px;width:337px;height:219px;background:#fff;box-shadow:0 0.5px 1.5px rgba(0,0,0,.35);"></div>
<div class="a" style="left:781px;top:774px;width:337px;height:1px;background:#eee3dc;"></div>
<svg style="left:790px;top:738px;" width="25" height="30" viewBox="810 755 25 30"><rect x="811.7" y="756.7" width="21.6" height="26.6" fill="#fff" stroke="#999" stroke-width="1.4"/><line x1="815.8" y1="762.60" x2="829.2" y2="762.60" stroke="#999" stroke-width="1.5"/><line x1="815.8" y1="767.15" x2="829.2" y2="767.15" stroke="#999" stroke-width="1.5"/><line x1="815.8" y1="771.70" x2="829.2" y2="771.70" stroke="#999" stroke-width="1.5"/><line x1="815.8" y1="776.25" x2="829.2" y2="776.25" stroke="#999" stroke-width="1.5"/></svg>
<div class="t" style="left:828.00px;top:743.09px;font-size:19.5px;color:#111;letter-spacing:0.120px;-webkit-text-stroke:0.65px #111;">The Elders</div>
<div class="t" style="left:789.70px;top:785.39px;font-size:16.2px;color:#111;letter-spacing:0.584px;-webkit-text-stroke:0.2px #111;">Alyosha pleased to see brothers. Sees</div>
<div class="t" style="left:789.70px;top:810.19px;font-size:16.2px;color:#111;letter-spacing:0.584px;-webkit-text-stroke:0.2px #111;">how different they are - Ivan distant and</div>
<div class="t" style="left:789.70px;top:834.99px;font-size:16.2px;color:#111;letter-spacing:0.584px;-webkit-text-stroke:0.2px #111;">intellectual. Grows close to Dmitri.</div>
</div>
</body></html>
